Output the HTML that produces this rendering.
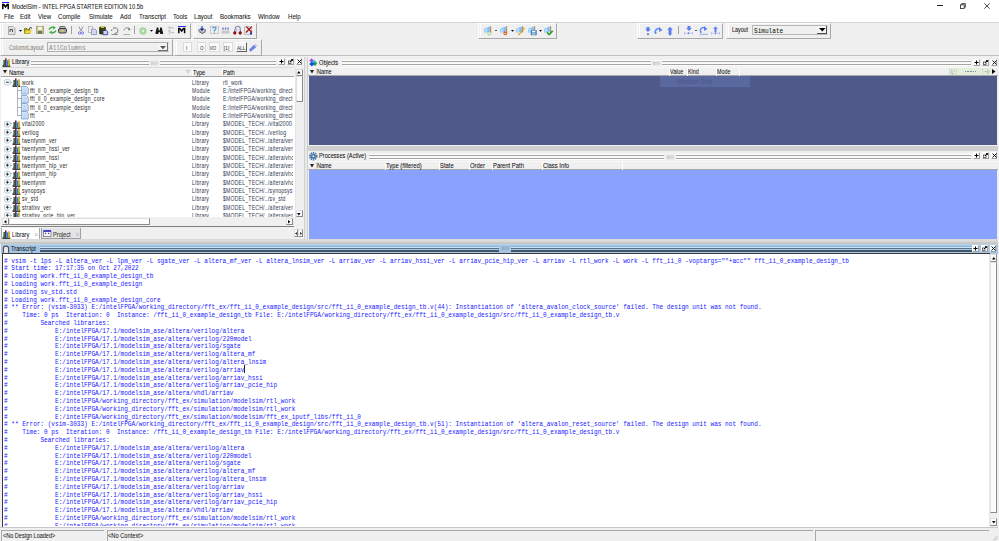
<!DOCTYPE html><html><head><meta charset="utf-8"><style>
html,body{margin:0;padding:0;width:999px;height:541px;overflow:hidden;background:#f0f0f0;position:relative}
div{position:absolute;box-sizing:border-box}
.t{white-space:pre;font-family:"Liberation Sans",sans-serif}
</style></head><body>
<div style="left:0px;top:0px;width:999px;height:22px;background:#fff"></div>
<div style="left:1.5px;top:1.8px;width:7.5px;height:1.3px;background:#1a1aff"></div>
<div style="left:1.5px;top:4px;width:7px;height:5.5px"><svg width="7" height="5.5" viewBox="0 0 7 5.5" style="display:block;overflow:visible"><path d="M0.8 5.2V0.6H1.8L3.5 3L5.2 0.6H6.2V5.2" fill="none" stroke="#000" stroke-width="1.5" stroke-linejoin="miter"/></svg></div>
<div class="t" style="left:12px;top:1.50px;font-size:6.5px;line-height:10px;color:#1a1a1a;font-family:'Liberation Sans',sans-serif;transform:scaleX(0.875);transform-origin:0 50%;-webkit-text-stroke:0.06px #1a1a1a;">ModelSim - INTEL FPGA STARTER EDITION 10.5b</div>
<div style="left:936.5px;top:5.3px;width:6px;height:0.8px;background:#222"></div>
<div style="left:959.5px;top:2.5px;width:6px;height:6px"><svg width="6" height="6" viewBox="0 0 6 6" style="display:block;overflow:visible"><rect x="0.5" y="1.8" width="3.7" height="3.7" fill="none" stroke="#222" stroke-width="0.8"/><path d="M1.8 1.8V0.6H5.4V4.2H4.2" fill="none" stroke="#222" stroke-width="0.8"/></svg></div>
<div style="left:983.5px;top:2.5px;width:6px;height:6px"><svg width="6" height="6" viewBox="0 0 6 6" style="display:block;overflow:visible"><path d="M0.3 0.3L5.7 5.7M5.7 0.3L0.3 5.7" stroke="#222" stroke-width="0.8"/></svg></div>
<div class="t" style="left:3.7px;top:12.40px;font-size:6.5px;line-height:10px;color:#1a1a1a;font-family:'Liberation Sans',sans-serif;transform:scaleX(0.94);transform-origin:0 50%;-webkit-text-stroke:0.06px #1a1a1a;">File</div>
<div class="t" style="left:20px;top:12.40px;font-size:6.5px;line-height:10px;color:#1a1a1a;font-family:'Liberation Sans',sans-serif;transform:scaleX(0.94);transform-origin:0 50%;-webkit-text-stroke:0.06px #1a1a1a;">Edit</div>
<div class="t" style="left:37.5px;top:12.40px;font-size:6.5px;line-height:10px;color:#1a1a1a;font-family:'Liberation Sans',sans-serif;transform:scaleX(0.94);transform-origin:0 50%;-webkit-text-stroke:0.06px #1a1a1a;">View</div>
<div class="t" style="left:58px;top:12.40px;font-size:6.5px;line-height:10px;color:#1a1a1a;font-family:'Liberation Sans',sans-serif;transform:scaleX(0.94);transform-origin:0 50%;-webkit-text-stroke:0.06px #1a1a1a;">Compile</div>
<div class="t" style="left:89px;top:12.40px;font-size:6.5px;line-height:10px;color:#1a1a1a;font-family:'Liberation Sans',sans-serif;transform:scaleX(0.94);transform-origin:0 50%;-webkit-text-stroke:0.06px #1a1a1a;">Simulate</div>
<div class="t" style="left:120px;top:12.40px;font-size:6.5px;line-height:10px;color:#1a1a1a;font-family:'Liberation Sans',sans-serif;transform:scaleX(0.94);transform-origin:0 50%;-webkit-text-stroke:0.06px #1a1a1a;">Add</div>
<div class="t" style="left:139px;top:12.40px;font-size:6.5px;line-height:10px;color:#1a1a1a;font-family:'Liberation Sans',sans-serif;transform:scaleX(0.94);transform-origin:0 50%;-webkit-text-stroke:0.06px #1a1a1a;">Transcript</div>
<div class="t" style="left:172.5px;top:12.40px;font-size:6.5px;line-height:10px;color:#1a1a1a;font-family:'Liberation Sans',sans-serif;transform:scaleX(0.94);transform-origin:0 50%;-webkit-text-stroke:0.06px #1a1a1a;">Tools</div>
<div class="t" style="left:194px;top:12.40px;font-size:6.5px;line-height:10px;color:#1a1a1a;font-family:'Liberation Sans',sans-serif;transform:scaleX(0.94);transform-origin:0 50%;-webkit-text-stroke:0.06px #1a1a1a;">Layout</div>
<div class="t" style="left:219.5px;top:12.40px;font-size:6.5px;line-height:10px;color:#1a1a1a;font-family:'Liberation Sans',sans-serif;transform:scaleX(0.94);transform-origin:0 50%;-webkit-text-stroke:0.06px #1a1a1a;">Bookmarks</div>
<div class="t" style="left:258px;top:12.40px;font-size:6.5px;line-height:10px;color:#1a1a1a;font-family:'Liberation Sans',sans-serif;transform:scaleX(0.94);transform-origin:0 50%;-webkit-text-stroke:0.06px #1a1a1a;">Window</div>
<div class="t" style="left:288px;top:12.40px;font-size:6.5px;line-height:10px;color:#1a1a1a;font-family:'Liberation Sans',sans-serif;transform:scaleX(0.94);transform-origin:0 50%;-webkit-text-stroke:0.06px #1a1a1a;">Help</div>
<div style="left:0px;top:21.8px;width:999px;height:34px;background:#f0f0f0;border-top:1px solid #d4d4d4"></div>
<div style="left:0px;top:55.4px;width:999px;height:1px;background:#c0c0c0"></div>
<div style="left:0px;top:22.5px;width:190.5px;height:16.299999999999997px;border-right:1px solid #a8a8a8;border-bottom:1px solid #a8a8a8;border-left:1px solid #fcfcfc;border-top:1px solid #fcfcfc"></div>
<div style="left:2px;top:24.0px;width:1px;height:13.299999999999997px;background:#a8a8a8;border-right:0.5px solid #fff"></div>
<div style="left:192.5px;top:22.5px;width:64.5px;height:16.299999999999997px;border-right:1px solid #a8a8a8;border-bottom:1px solid #a8a8a8;border-left:1px solid #fcfcfc;border-top:1px solid #fcfcfc"></div>
<div style="left:194.5px;top:24.0px;width:1px;height:13.299999999999997px;background:#a8a8a8;border-right:0.5px solid #fff"></div>
<div style="left:478px;top:22.5px;width:79px;height:16.299999999999997px;border-right:1px solid #a8a8a8;border-bottom:1px solid #a8a8a8;border-left:1px solid #fcfcfc;border-top:1px solid #fcfcfc"></div>
<div style="left:480px;top:24.0px;width:1px;height:13.299999999999997px;background:#a8a8a8;border-right:0.5px solid #fff"></div>
<div style="left:637px;top:22.5px;width:86px;height:16.299999999999997px;border-right:1px solid #a8a8a8;border-bottom:1px solid #a8a8a8;border-left:1px solid #fcfcfc;border-top:1px solid #fcfcfc"></div>
<div style="left:639px;top:24.0px;width:1px;height:13.299999999999997px;background:#a8a8a8;border-right:0.5px solid #fff"></div>
<div style="left:725.5px;top:22.5px;width:105.5px;height:16.299999999999997px;border-right:1px solid #a8a8a8;border-bottom:1px solid #a8a8a8;border-left:1px solid #fcfcfc;border-top:1px solid #fcfcfc"></div>
<div style="left:727.5px;top:24.0px;width:1px;height:13.299999999999997px;background:#a8a8a8;border-right:0.5px solid #fff"></div>
<div style="left:0px;top:39px;width:172.5px;height:17.4px;border-right:1px solid #a8a8a8;border-bottom:1px solid #a8a8a8;border-left:1px solid #fcfcfc;border-top:1px solid #fcfcfc"></div>
<div style="left:2px;top:40.5px;width:1px;height:14.399999999999999px;background:#a8a8a8;border-right:0.5px solid #fff"></div>
<div style="left:174px;top:39px;width:88px;height:17.4px;border-right:1px solid #a8a8a8;border-bottom:1px solid #a8a8a8;border-left:1px solid #fcfcfc;border-top:1px solid #fcfcfc"></div>
<div style="left:176px;top:40.5px;width:1px;height:14.399999999999999px;background:#a8a8a8;border-right:0.5px solid #fff"></div>
<div style="left:8px;top:25.5px;width:7.5px;height:9px"><svg width="7.5" height="9" viewBox="0 0 7.5 9" style="display:block;overflow:visible"><path d="M0.5 0.5H5L7 2.5V8.5H0.5Z" fill="#e4e4e4" stroke="#9a9a9a" stroke-width="0.8"/><path d="M2 6V3.5H4.5V6" fill="none" stroke="#404040" stroke-width="0.9"/></svg></div>
<div style="left:18.5px;top:29.7px;width:3px;height:2px"><svg width="3" height="2" viewBox="0 0 3 2" style="display:block;overflow:visible"><path d="M0 0H3L1.5 1.8Z" fill="#000"/></svg></div>
<div style="left:24px;top:27.0px;width:8.5px;height:7px"><svg width="8.5" height="7" viewBox="0 0 8.5 7" style="display:block;overflow:visible"><path d="M0.5 1.5H3L4 2.5H6V6.5H0.5Z" fill="#b8a000" stroke="#605000" stroke-width="0.6"/><path d="M1.5 3.5H8L6.5 6.5H0.5Z" fill="#e8d840"/><path d="M5 1.5Q6.5 0 8 1.2" fill="none" stroke="#000" stroke-width="0.8"/></svg></div>
<div style="left:36px;top:26.0px;width:8px;height:8px"><svg width="8" height="8" viewBox="0 0 8 8" style="display:block;overflow:visible"><rect x="0.4" y="0.4" width="7.2" height="7.2" fill="#c8c890" stroke="#a0a060" stroke-width="0.8"/><rect x="2" y="0.8" width="4" height="3" fill="#f4f4f4"/><rect x="2" y="5" width="4" height="2.6" fill="#707070"/></svg></div>
<div style="left:47.5px;top:26.0px;width:9px;height:8px"><svg width="9" height="8" viewBox="0 0 9 8" style="display:block;overflow:visible"><path d="M1 3.5Q2.5 0.5 6 1.5" fill="none" stroke="#40b040" stroke-width="1.6"/><path d="M5 0L8 1.8L5.3 3.5Z" fill="#40b040"/><path d="M8 4.5Q6.5 7.5 3 6.5" fill="none" stroke="#40b040" stroke-width="1.6"/><path d="M4 8L1 6.2L3.7 4.5Z" fill="#40b040"/></svg></div>
<div style="left:58px;top:26.0px;width:9px;height:8px"><svg width="9" height="8" viewBox="0 0 9 8" style="display:block;overflow:visible"><path d="M2 0.5H6.5L7.5 2.5H1.5Z" fill="#c0c0c0" stroke="#404040" stroke-width="0.7"/><rect x="0.5" y="2.5" width="8" height="4.5" rx="1.5" fill="#a8a8a8" stroke="#303030" stroke-width="0.9"/><rect x="3" y="4.2" width="3" height="1.2" fill="#e0d040"/></svg></div>
<div style="left:71.3px;top:26px;width:0.9px;height:8px;background:#a0a0a0"></div>
<div style="left:78px;top:25.5px;width:6px;height:9px"><svg width="6" height="9" viewBox="0 0 6 9" style="display:block;overflow:visible"><path d="M1 0.5L3 5M5 0.5L3 5" stroke="#707070" stroke-width="0.7" fill="none"/><circle cx="1.6" cy="7" r="1.2" fill="none" stroke="#6a70f0" stroke-width="0.9"/><circle cx="4.4" cy="7" r="1.2" fill="none" stroke="#6a70f0" stroke-width="0.9"/></svg></div>
<div style="left:87.5px;top:25.5px;width:9px;height:9px"><svg width="9" height="9" viewBox="0 0 9 9" style="display:block;overflow:visible"><rect x="0.5" y="0.5" width="4" height="6" fill="#f0f0f0" stroke="#a0a0a0" stroke-width="0.6"/><path d="M3.5 3H7L8.5 4.5V8.5H3.5Z" fill="#d8d8e8" stroke="#7080c0" stroke-width="0.7"/></svg></div>
<div style="left:98.5px;top:25.5px;width:9px;height:9px"><svg width="9" height="9" viewBox="0 0 9 9" style="display:block;overflow:visible"><rect x="0.5" y="1" width="6" height="7" rx="0.8" fill="#3c3c10" stroke="#202000" stroke-width="0.6"/><rect x="1.8" y="0.3" width="3.4" height="1.6" fill="#e0d040"/><path d="M4 4.5H7.5L8.7 5.7V8.7H4Z" fill="#d0d0e8" stroke="#2030a0" stroke-width="0.8"/></svg></div>
<div style="left:111px;top:26.5px;width:8px;height:8px"><svg width="8" height="8" viewBox="0 0 8 8" style="display:block;overflow:visible"><path d="M1 2.5L0.5 4" stroke="#404040" stroke-width="0.8"/><path d="M2 1.2Q6.5 0 7 3.5Q7 6.5 3.5 6.5" fill="none" stroke="#555" stroke-width="0.8"/><path d="M0.5 7.5H7" stroke="#777" stroke-width="0.8"/></svg></div>
<div style="left:123px;top:26.5px;width:8px;height:8px"><svg width="8" height="8" viewBox="0 0 8 8" style="display:block;overflow:visible"><path d="M6 1.2Q1.5 0 1 3.5" fill="none" stroke="#777" stroke-width="0.8"/><path d="M5.5 0.5L7.5 2.5L5.5 3.5Z" fill="#555"/><path d="M0.5 7.5H7" stroke="#999" stroke-width="0.8"/></svg></div>
<div style="left:134.3px;top:26px;width:0.9px;height:8px;background:#a0a0a0"></div>
<div style="left:139px;top:26.5px;width:8px;height:8px"><svg width="8" height="8" viewBox="0 0 8 8" style="display:block;overflow:visible"><circle cx="4" cy="4" r="3.7" fill="#a8d8a0"/><circle cx="4" cy="4" r="1" fill="#f0fff0"/></svg></div>
<div style="left:149.5px;top:30px;width:3px;height:2px"><svg width="3" height="2" viewBox="0 0 3 2" style="display:block;overflow:visible"><path d="M0 0H3L1.5 1.8Z" fill="#000"/></svg></div>
<div style="left:155px;top:26.5px;width:8.5px;height:7.5px"><svg width="8.5" height="7.5" viewBox="0 0 8.5 7.5" style="display:block;overflow:visible"><path d="M1.8 0.5H3.3L3.8 3.5H4.7L5.2 0.5H6.7L8.2 6.5Q6.5 7.5 5 6.5L4.7 5H3.8L3.5 6.5Q2 7.5 0.3 6.5Z" fill="#151515"/></svg></div>
<div style="left:166.5px;top:26.0px;width:8px;height:8.5px"><svg width="8" height="8.5" viewBox="0 0 8 8.5" style="display:block;overflow:visible"><circle cx="2.5" cy="1.8" r="1.3" fill="#c8c8c8"/><circle cx="2.5" cy="5" r="1.3" fill="#c8c8c8"/><circle cx="2.5" cy="7.5" r="1" fill="#d0d0d0"/><path d="M3.5 2H7M3.5 6.5H7" stroke="#a0a0a0" stroke-width="0.6"/></svg></div>
<div style="left:178px;top:25.5px;width:7.8px;height:1.4px;background:#2a30ff"></div>
<div style="left:178px;top:28.3px;width:7.5px;height:5.5px"><svg width="7.5" height="5.5" viewBox="0 0 7.5 5.5" style="display:block;overflow:visible"><path d="M0.8 5.2V0.6H1.8L3.7 3L5.6 0.6H6.6V5.2" fill="none" stroke="#000" stroke-width="1.5"/></svg></div>
<div style="left:198px;top:26.0px;width:8.5px;height:8px"><svg width="8.5" height="8" viewBox="0 0 8.5 8" style="display:block;overflow:visible"><path d="M0.5 4L4 2.5L8 4L4.5 7.5Z" fill="#d0d0d0" stroke="#404040" stroke-width="0.6"/><path d="M0.5 5.5L4.5 7.5L8 5.5" fill="none" stroke="#404040" stroke-width="0.6"/><path d="M4 0V4M2.5 2.5L4 4.5L5.5 2.5" stroke="#1a3ab0" stroke-width="1.1" fill="none"/></svg></div>
<div style="left:210px;top:26.0px;width:9px;height:8px"><svg width="9" height="8" viewBox="0 0 9 8" style="display:block;overflow:visible"><rect x="0.5" y="0.5" width="8" height="7" fill="#f0f0f0" stroke="#b0b0b0" stroke-width="0.6"/><path d="M2.5 2.3Q4.5 0.3 6 2.2Q6 3.8 4.3 4.3V5.5" fill="none" stroke="#4a90e0" stroke-width="1.2"/><circle cx="4.3" cy="6.8" r="0.6" fill="#4a90e0"/></svg></div>
<div style="left:221px;top:26.0px;width:9px;height:8px"><svg width="9" height="8" viewBox="0 0 9 8" style="display:block;overflow:visible"><rect x="0.5" y="4.5" width="8" height="3.2" fill="#c8c8d0"/><path d="M2 1V4M4.5 1V4M7 1V4M1.2 2L2 3.5L2.8 2M3.7 2L4.5 3.5L5.3 2M6.2 2L7 3.5L7.8 2" stroke="#7070d0" stroke-width="0.6" fill="none"/></svg></div>
<div style="left:233px;top:26.0px;width:9px;height:8.5px"><svg width="9" height="8.5" viewBox="0 0 9 8.5" style="display:block;overflow:visible"><path d="M1.5 6L2.5 1Q4.5 -0.5 7 1L7.5 6" fill="#e8e8f4" stroke="#606080" stroke-width="0.8"/><path d="M4 2.5L3.5 5.5" stroke="#8080b0" stroke-width="0.5"/><circle cx="1.8" cy="7" r="1.4" fill="#b01010" stroke="#300" stroke-width="0.4"/><circle cx="7.2" cy="7" r="1.4" fill="#b01010" stroke="#300" stroke-width="0.4"/></svg></div>
<div style="left:244px;top:26.0px;width:9px;height:9px"><svg width="9" height="9" viewBox="0 0 9 9" style="display:block;overflow:visible"><path d="M0.5 0.5H5.5L7.5 2.5V8.5H0.5Z" fill="#e8e8e8" stroke="#a0a0a0" stroke-width="0.6"/><path d="M2.5 0.8L8 6.5M7.8 0.5L2 6.5" stroke="#b01818" stroke-width="1.3"/><path d="M6 7L7 5.5L8 7V8.5H6Z" fill="#1a3ab0"/></svg></div>
<div style="left:484px;top:26.0px;width:9px;height:9px"><svg width="9" height="9" viewBox="0 0 9 9" style="display:block;overflow:visible"><path d="M0.3 2.8L5.8 0.6V5.6L0.3 6.8Z" fill="#7cbcf4"/><path d="M1 3L3.5 2V5.5L1 6.2Z" fill="#b4dcfc"/><path d="M6.6 0.3V6.5" stroke="#b88858" stroke-width="1.1"/><circle cx="5.3" cy="7.3" r="1.6" fill="#e8f4e0" stroke="#88b878" stroke-width="0.7"/></svg></div>
<div style="left:500px;top:26.0px;width:9px;height:9px"><svg width="9" height="9" viewBox="0 0 9 9" style="display:block;overflow:visible"><path d="M0.3 2.8L5.8 0.6V5.6L0.3 6.8Z" fill="#7cbcf4"/><path d="M1 3L3.5 2V5.5L1 6.2Z" fill="#b4dcfc"/><path d="M6.6 0.3V6.5" stroke="#b88858" stroke-width="1.1"/><circle cx="5.3" cy="7.3" r="1.7" fill="#e86828" stroke="#b04810" stroke-width="0.4"/><rect x="4.3" y="7" width="2" height="0.6" fill="#fff"/></svg></div>
<div style="left:516px;top:26.0px;width:9px;height:9px"><svg width="9" height="9" viewBox="0 0 9 9" style="display:block;overflow:visible"><path d="M0.3 2.8L5.8 0.6V5.6L0.3 6.8Z" fill="#7cbcf4"/><path d="M1 3L3.5 2V5.5L1 6.2Z" fill="#b4dcfc"/><path d="M6.6 0.3V6.5" stroke="#b88858" stroke-width="1.1"/><path d="M2.3 8.7L7.8 1.8L8.6 2.6L3.2 9Z" fill="#e8c030" stroke="#b08010" stroke-width="0.4"/></svg></div>
<div style="left:528px;top:26.0px;width:9px;height:9px"><svg width="9" height="9" viewBox="0 0 9 9" style="display:block;overflow:visible"><path d="M0.3 2.8L5.8 0.6V5.6L0.3 6.8Z" fill="#7cbcf4"/><path d="M1 3L3.5 2V5.5L1 6.2Z" fill="#b4dcfc"/><path d="M6.6 0.3V6.5" stroke="#b88858" stroke-width="1.1"/><rect x="3" y="4.5" width="5.5" height="4.5" fill="#5a90e0" stroke="#2a60b0" stroke-width="0.4"/><rect x="4.2" y="4.8" width="3" height="1.5" fill="#fff"/><rect x="4.2" y="7.2" width="3" height="1.5" fill="#a8e0a8"/></svg></div>
<div style="left:544px;top:26.0px;width:9px;height:9px"><svg width="9" height="9" viewBox="0 0 9 9" style="display:block;overflow:visible"><path d="M0.3 2.8L5.8 0.6V5.6L0.3 6.8Z" fill="#7cbcf4"/><path d="M1 3L3.5 2V5.5L1 6.2Z" fill="#b4dcfc"/><path d="M6.6 0.3V6.5" stroke="#b88858" stroke-width="1.1"/><path d="M3 6.3L5.2 8.5L8.7 4.8" fill="none" stroke="#30a030" stroke-width="1.7"/></svg></div>
<div style="left:495.3px;top:29.8px;width:1.8px;height:0.8px;background:#555"></div>
<div style="left:511.3px;top:29.8px;width:3px;height:2px"><svg width="3" height="2" viewBox="0 0 3 2" style="display:block;overflow:visible"><path d="M0 0H3L1.5 1.8Z" fill="#000"/></svg></div>
<div style="left:538.5px;top:29.8px;width:3px;height:2px"><svg width="3" height="2" viewBox="0 0 3 2" style="display:block;overflow:visible"><path d="M0 0H3L1.5 1.8Z" fill="#000"/></svg></div>
<div style="left:644.5px;top:26.5px;width:6px;height:8.5px"><svg width="6" height="8.5" viewBox="0 0 6 8.5" style="display:block;overflow:visible"><path d="M1.5 0H4.5V2.2H5.8L3.0 5L0.2 2.2H1.5Z" fill="#5a80f0"/><circle cx="3" cy="7.2" r="1.1" fill="#5a80f0"/></svg></div>
<div style="left:653.5px;top:26.5px;width:9px;height:7px"><svg width="9" height="7" viewBox="0 0 9 7" style="display:block;overflow:visible"><path d="M1 5Q2 1 5.5 1.5" fill="none" stroke="#6a90f4" stroke-width="1.6"/><path d="M5 0L8.5 3L5 5Z" fill="#5a80f0"/><circle cx="1.5" cy="5.8" r="1.1" fill="#5a80f0"/></svg></div>
<div style="left:667px;top:26.5px;width:6px;height:8.5px"><svg width="6" height="8.5" viewBox="0 0 6 8.5" style="display:block;overflow:visible"><path d="M1.5 8.5H4.5V3.8H5.8L3 0.8L0.2 3.8H1.5Z" fill="#5a80f0" transform="translate(0,-1)"/><circle cx="3" cy="7.5" r="1.1" fill="#5a80f0"/></svg></div>
<div style="left:677.8px;top:26px;width:0.9px;height:8px;background:#a0a0a0"></div>
<div style="left:684px;top:26.0px;width:9px;height:9px"><svg width="9" height="9" viewBox="0 0 9 9" style="display:block;overflow:visible"><path d="M3.5 0H6.5V2.2H7.8L5.0 5L2.2 2.2H3.5Z" fill="#5a80f0"/><path d="M0.5 6V8.5M8.5 6V8.5M2 6.5V8M7 6.5V8" stroke="#8aa0f0" stroke-width="0.6"/><circle cx="4.5" cy="7.3" r="1" fill="#5a80f0"/></svg></div>
<div style="left:695.3px;top:29.8px;width:1.6px;height:0.8px;background:#555"></div>
<div style="left:698.5px;top:26.0px;width:9px;height:9px"><svg width="9" height="9" viewBox="0 0 9 9" style="display:block;overflow:visible"><path d="M1 5Q2 1 5.5 1.5" fill="none" stroke="#6a90f4" stroke-width="1.5"/><path d="M5 0L8.5 3L5 5Z" fill="#5a80f0"/><circle cx="1.8" cy="6" r="1" fill="#5a80f0"/><path d="M0.5 8.3H9" stroke="#6a90f4" stroke-width="0.7"/></svg></div>
<div style="left:711px;top:26.0px;width:9px;height:9px"><svg width="9" height="9" viewBox="0 0 9 9" style="display:block;overflow:visible"><path d="M3.5 6H5.5V3H6.8L4.5 0.3L2.2 3H3.5Z" fill="#5a80f0"/><path d="M0.5 6V8.5M8.5 6V8.5M2 6.5V8M7 6.5V8" stroke="#8aa0f0" stroke-width="0.6"/><circle cx="4.5" cy="7.3" r="1" fill="#5a80f0"/></svg></div>
<div class="t" style="left:732px;top:25.30px;font-size:6.3px;line-height:10px;color:#101010;font-family:'Liberation Sans',sans-serif;transform:scaleX(0.85);transform-origin:0 50%;-webkit-text-stroke:0.06px #101010;">Layout</div>
<div style="left:752px;top:25.3px;width:76px;height:9.5px;background:#f0f0f0;border:1px solid #b8b8b8;border-right:1px solid #e8e8e8"></div>
<div class="t" style="left:753.5px;top:25.80px;font-size:7px;line-height:10px;color:#101010;font-family:'Liberation Mono',sans-serif;transform:scaleX(0.87);transform-origin:0 50%;-webkit-text-stroke:0.05px #101010;">Simulate</div>
<div style="left:817px;top:26.3px;width:10px;height:7.5px;background:#f4f4f4;border-right:1px solid #505050;border-bottom:1px solid #505050"></div>
<div style="left:818.5px;top:28.3px;width:6.5px;height:4px"><svg width="6.5" height="4" viewBox="0 0 6.5 4" style="display:block;overflow:visible"><path d="M0 0H6.5L3.25 3.5Z" fill="#000"/></svg></div>
<div class="t" style="left:9px;top:42.50px;font-size:6.5px;line-height:10px;color:#8a8070;font-family:'Liberation Sans',sans-serif;transform:scaleX(0.82);transform-origin:0 50%;-webkit-text-stroke:0.06px #8a8070;">ColumnLayout</div>
<div style="left:47px;top:42px;width:122px;height:10px;background:#f0f0f0;border:1px solid #b0b0b0;border-right:1px solid #e8e8e8"></div>
<div class="t" style="left:48.5px;top:42.50px;font-size:7px;line-height:10px;color:#8a8a8a;font-family:'Liberation Mono',sans-serif;transform:scaleX(0.87);transform-origin:0 50%;-webkit-text-stroke:0.05px #8a8a8a;">AllColumns</div>
<div style="left:157.5px;top:43px;width:10.5px;height:8px;background:#f4f4f4;border-right:1px solid #707070;border-bottom:1px solid #707070"></div>
<div style="left:159.5px;top:45.5px;width:6px;height:3.5px"><svg width="6" height="3.5" viewBox="0 0 6 3.5" style="display:block;overflow:visible"><path d="M0 0H6L3 3.2Z" fill="#555"/></svg></div>
<div style="left:183px;top:42px;width:8.5px;height:10px;background:#fafafa;border:1px solid #dcdcdc"></div>
<div class="t" style="left:185.85px;top:42.70px;font-size:5.5px;line-height:10px;color:#404040;font-family:'Liberation Sans',sans-serif;transform:scaleX(0.85);transform-origin:0 50%;-webkit-text-stroke:0.06px #404040;">I</div>
<div style="left:196.5px;top:42px;width:9px;height:10px;background:#fafafa;border:1px solid #dcdcdc"></div>
<div class="t" style="left:199.6px;top:42.70px;font-size:5.5px;line-height:10px;color:#404040;font-family:'Liberation Sans',sans-serif;transform:scaleX(0.85);transform-origin:0 50%;-webkit-text-stroke:0.06px #404040;">O</div>
<div style="left:209px;top:42px;width:10.5px;height:10px;background:#fafafa;border:1px solid #dcdcdc"></div>
<div class="t" style="left:210.05px;top:42.70px;font-size:5.5px;line-height:10px;color:#404040;font-family:'Liberation Sans',sans-serif;transform:scaleX(0.85);transform-origin:0 50%;-webkit-text-stroke:0.06px #404040;">I/O</div>
<div style="left:223px;top:42px;width:10px;height:10px;background:#fafafa;border:1px solid #dcdcdc"></div>
<div class="t" style="left:223.8px;top:42.70px;font-size:5.5px;line-height:10px;color:#404040;font-family:'Liberation Sans',sans-serif;transform:scaleX(0.85);transform-origin:0 50%;-webkit-text-stroke:0.06px #404040;">[1]</div>
<div style="left:236px;top:42px;width:11px;height:10px;background:#f4f4f4;border-right:1px solid #606060;border-bottom:1px solid #606060;border-top:1px solid #fff;border-left:1px solid #fff"></div>
<div class="t" style="left:237.3px;top:42.70px;font-size:5.5px;line-height:10px;color:#404040;font-family:'Liberation Sans',sans-serif;transform:scaleX(0.85);transform-origin:0 50%;-webkit-text-stroke:0.06px #404040;">ALL</div>
<div style="left:249px;top:42.5px;width:9px;height:9px"><svg width="9" height="9" viewBox="0 0 9 9" style="display:block;overflow:visible"><path d="M1.5 8.5L0.5 6.5L5 2L7 4Z" fill="#6a8ae8" stroke="#4a6ad0" stroke-width="0.5"/><path d="M5 2L6.5 0.5L8.5 2.5L7 4Z" fill="#e0c8e8"/><path d="M6 1.2L8 3.2" stroke="#b0d0b0" stroke-width="0.6"/></svg></div>
<div style="left:0px;top:56.5px;width:999px;height:471px;background:#f0f0f0"></div>
<div style="left:31.2px;top:60px;width:244.8px;height:6px;background:linear-gradient(#fff 0 1px,#a4a4a4 1px 2px,#fafafa 2px 3.6px,#a4a4a4 3.6px 4.6px,#fff 4.6px 5.6px,transparent 5.6px)"></div>
<div class="t" style="left:12px;top:57.30px;font-size:6.5px;line-height:10px;color:#101010;font-family:'Liberation Sans',sans-serif;transform:scaleX(0.87);transform-origin:0 50%;-webkit-text-stroke:0.06px #101010;">Library</div>
<div style="left:278px;top:58px;width:6.8px;height:7px;background:#f6f6f6;border-right:1px solid #a0a0a0;border-bottom:1px solid #a0a0a0;border-top:0.5px solid #fff;border-left:0.5px solid #fff"></div>
<div style="left:287px;top:58px;width:6.8px;height:7px;background:#f6f6f6;border-right:1px solid #a0a0a0;border-bottom:1px solid #a0a0a0;border-top:0.5px solid #fff;border-left:0.5px solid #fff"></div>
<div style="left:295.5px;top:58px;width:6.8px;height:7px;background:#f6f6f6;border-right:1px solid #a0a0a0;border-bottom:1px solid #a0a0a0;border-top:0.5px solid #fff;border-left:0.5px solid #fff"></div>
<div style="left:279px;top:59px;width:5px;height:5px"><svg width="5" height="5" viewBox="0 0 5 5" style="display:block;overflow:visible"><path d="M2.5 0.5V4.5M0.5 2.5H4.5" stroke="#000" stroke-width="1"/></svg></div>
<div style="left:288px;top:59px;width:5px;height:5px"><svg width="5" height="5" viewBox="0 0 5 5" style="display:block;overflow:visible"><rect x="0.5" y="2" width="2.5" height="2.5" fill="none" stroke="#333" stroke-width="0.7"/><path d="M2 3L4.5 0.5M3 0.5H4.5V2" fill="none" stroke="#000" stroke-width="0.9"/></svg></div>
<div style="left:296.5px;top:59px;width:5px;height:5px"><svg width="5" height="5" viewBox="0 0 5 5" style="display:block;overflow:visible"><path d="M0.5 0.5L4.5 4.5M4.5 0.5L0.5 4.5" stroke="#000" stroke-width="0.9"/></svg></div>
<div style="left:1.6px;top:58.2px;width:9px;height:9px"><svg width="9" height="9" viewBox="0 0 9 9" style="display:block;overflow:visible"><path d="M0.2 8.6L1.6 5.5V8.6Z M8.6 8.6L7.2 5.5V8.6Z" fill="#101010"/><rect x="1.4" y="2" width="1.6" height="6.4" fill="#0c8040"/><rect x="3" y="0.4" width="1.6" height="8" fill="#8c1460"/><rect x="4.6" y="2.3" width="1.6" height="6.1" fill="#2480d0"/><rect x="6.2" y="1.3" width="1.5" height="7.1" fill="#b8a000"/><rect x="1" y="8" width="6.8" height="0.8" fill="#202020"/></svg></div>
<div style="left:148.5px;top:60.3px;width:11.5px;height:6px;background:#f2f2f2"></div>
<div style="left:150.0px;top:61.099999999999994px;width:8.5px;height:4.4px"><svg width="8.5" height="4.4" viewBox="0 0 8.5 4.4" style="display:block;overflow:visible"><rect x="0.3" y="0.3" width="7.9" height="3.8" fill="none" stroke="#a8a8a8" stroke-width="0.4" stroke-dasharray="0.5 0.5" opacity="0.8"/><path d="M1 1.2H7.5M1 2.2H7.5M1 3.2H7.5" stroke="#a8a8a8" stroke-width="0.7" stroke-dasharray="0.7 0.5"/></svg></div>
<div style="left:1px;top:67.3px;width:293px;height:9.3px;background:#f0f0f0;border-top:1px solid #dadada;border-bottom:1px solid #a4a4a4"></div>
<div style="left:2.8px;top:70.3px;width:4px;height:3.5px"><svg width="4" height="3.5" viewBox="0 0 4 3.5" style="display:block;overflow:visible"><path d="M0 0H4L2 3.5Z" fill="#202020"/></svg></div>
<div style="left:8px;top:68.3px;width:0.8px;height:7.5px;background:#d4d4d4;border-right:0.5px solid #fff"></div>
<div class="t" style="left:9px;top:67.50px;font-size:6.5px;line-height:10px;color:#101010;font-family:'Liberation Sans',sans-serif;transform:scaleX(0.87);transform-origin:0 50%;-webkit-text-stroke:0.06px #101010;">Name</div>
<div style="left:185.5px;top:69.5px;width:4px;height:3.5px"><svg width="4" height="3.5" viewBox="0 0 4 3.5" style="display:block;overflow:visible"><path d="M0.3 0.3H3.7L2 3Z" fill="none" stroke="#a0a0a0" stroke-width="0.5"/></svg></div>
<div style="left:192.3px;top:68.3px;width:0.8px;height:7.5px;background:#c8c8c8;border-right:0.5px solid #fff"></div>
<div class="t" style="left:193.3px;top:67.50px;font-size:6.5px;line-height:10px;color:#101010;font-family:'Liberation Sans',sans-serif;transform:scaleX(0.87);transform-origin:0 50%;-webkit-text-stroke:0.06px #101010;">Type</div>
<div style="left:222px;top:68.3px;width:0.8px;height:7.5px;background:#c8c8c8;border-right:0.5px solid #fff"></div>
<div class="t" style="left:223px;top:67.50px;font-size:6.5px;line-height:10px;color:#101010;font-family:'Liberation Sans',sans-serif;transform:scaleX(0.87);transform-origin:0 50%;-webkit-text-stroke:0.06px #101010;">Path</div>
<div style="left:1px;top:76.5px;width:294px;height:141px;background:#fff"></div>
<div style="left:1px;top:76.5px;width:292px;height:140.5px;overflow:hidden">
<div style="left:3px;top:2.5px;width:7px;height:6.5px"><svg width="7" height="6.5" viewBox="0 0 7 6.5" style="display:block;overflow:visible"><rect x="0.4" y="0.4" width="6" height="5.6" rx="2" fill="#f8fafc" stroke="#b0bcd8" stroke-width="0.8"/><path d="M1.9 3.2H4.9" stroke="#202020" stroke-width="0.9"/></svg></div>
<div style="left:9.3px;top:5.2px;width:1.5px;height:0.6px;background:#b0b0b0"></div>
<div style="left:11.0px;top:1.4000000000000001px;width:9px;height:9px"><svg width="9" height="9" viewBox="0 0 9 9" style="display:block;overflow:visible"><path d="M0.2 8.6L1.6 5.5V8.6Z M8.6 8.6L7.2 5.5V8.6Z" fill="#101010"/><rect x="1.4" y="2" width="1.6" height="6.4" fill="#0c8040"/><rect x="3" y="0.4" width="1.6" height="8" fill="#8c1460"/><rect x="4.6" y="2.3" width="1.6" height="6.1" fill="#2480d0"/><rect x="6.2" y="1.3" width="1.5" height="7.1" fill="#b8a000"/><rect x="1" y="8" width="6.8" height="0.8" fill="#202020"/></svg></div>
<div class="t" style="left:20.9px;top:1.00px;font-size:6.5px;line-height:10px;color:#282828;font-family:'Liberation Sans',sans-serif;transform:scaleX(0.79);transform-origin:0 50%;-webkit-text-stroke:0.02px #282828;letter-spacing:0.3px">work</div>
<div class="t" style="left:191px;top:1.00px;font-size:6.5px;line-height:10px;color:#303850;font-family:'Liberation Sans',sans-serif;transform:scaleX(0.78);transform-origin:0 50%;-webkit-text-stroke:0.02px #303850;letter-spacing:0.3px">Library</div>
<div class="t" style="left:222px;top:1.00px;font-size:6.5px;line-height:10px;color:#303850;font-family:'Liberation Sans',sans-serif;transform:scaleX(0.78);transform-origin:0 50%;-webkit-text-stroke:0.02px #303850;letter-spacing:0.3px">rtl_work</div>
<div style="left:16.2px;top:9.640000000000004px;width:0.9px;height:8.34px;background:#b0b0b0"></div>
<div style="left:16.2px;top:13.640000000000004px;width:4px;height:0.9px;background:#b0b0b0"></div>
<div style="left:20px;top:9.840000000000003px;width:8px;height:8.5px"><svg width="8" height="8.5" viewBox="0 0 8 8.5" style="display:block;overflow:visible"><path d="M0.5 0.5H5.5L7.3 2.3V8H0.5Z" fill="#d4e6fa" stroke="#7a98c0" stroke-width="0.8"/><path d="M1.8 3H5.5M1.8 4.8H5.5M1.8 6.5H5.5" stroke="#a0c0e8" stroke-width="0.6"/></svg></div>
<div class="t" style="left:29.1px;top:9.34px;font-size:6.5px;line-height:10px;color:#282828;font-family:'Liberation Sans',sans-serif;transform:scaleX(0.79);transform-origin:0 50%;-webkit-text-stroke:0.02px #282828;letter-spacing:0.3px">fft_ii_0_example_design_tb</div>
<div class="t" style="left:191px;top:9.34px;font-size:6.5px;line-height:10px;color:#303850;font-family:'Liberation Sans',sans-serif;transform:scaleX(0.78);transform-origin:0 50%;-webkit-text-stroke:0.02px #303850;letter-spacing:0.3px">Module</div>
<div class="t" style="left:222px;top:9.34px;font-size:6.5px;line-height:10px;color:#303850;font-family:'Liberation Sans',sans-serif;transform:scaleX(0.78);transform-origin:0 50%;-webkit-text-stroke:0.02px #303850;letter-spacing:0.3px">E:/intelFPGA/working_direct</div>
<div style="left:16.2px;top:17.980000000000008px;width:0.9px;height:8.34px;background:#b0b0b0"></div>
<div style="left:16.2px;top:21.980000000000008px;width:4px;height:0.9px;background:#b0b0b0"></div>
<div style="left:20px;top:18.180000000000007px;width:8px;height:8.5px"><svg width="8" height="8.5" viewBox="0 0 8 8.5" style="display:block;overflow:visible"><path d="M0.5 0.5H5.5L7.3 2.3V8H0.5Z" fill="#d4e6fa" stroke="#7a98c0" stroke-width="0.8"/><path d="M1.8 3H5.5M1.8 4.8H5.5M1.8 6.5H5.5" stroke="#a0c0e8" stroke-width="0.6"/></svg></div>
<div class="t" style="left:29.1px;top:17.68px;font-size:6.5px;line-height:10px;color:#282828;font-family:'Liberation Sans',sans-serif;transform:scaleX(0.79);transform-origin:0 50%;-webkit-text-stroke:0.02px #282828;letter-spacing:0.3px">fft_ii_0_example_design_core</div>
<div class="t" style="left:191px;top:17.68px;font-size:6.5px;line-height:10px;color:#303850;font-family:'Liberation Sans',sans-serif;transform:scaleX(0.78);transform-origin:0 50%;-webkit-text-stroke:0.02px #303850;letter-spacing:0.3px">Module</div>
<div class="t" style="left:222px;top:17.68px;font-size:6.5px;line-height:10px;color:#303850;font-family:'Liberation Sans',sans-serif;transform:scaleX(0.78);transform-origin:0 50%;-webkit-text-stroke:0.02px #303850;letter-spacing:0.3px">E:/intelFPGA/working_direct</div>
<div style="left:16.2px;top:26.319999999999997px;width:0.9px;height:8.34px;background:#b0b0b0"></div>
<div style="left:16.2px;top:30.319999999999997px;width:4px;height:0.9px;background:#b0b0b0"></div>
<div style="left:20px;top:26.519999999999996px;width:8px;height:8.5px"><svg width="8" height="8.5" viewBox="0 0 8 8.5" style="display:block;overflow:visible"><path d="M0.5 0.5H5.5L7.3 2.3V8H0.5Z" fill="#d4e6fa" stroke="#7a98c0" stroke-width="0.8"/><path d="M1.8 3H5.5M1.8 4.8H5.5M1.8 6.5H5.5" stroke="#a0c0e8" stroke-width="0.6"/></svg></div>
<div class="t" style="left:29.1px;top:26.02px;font-size:6.5px;line-height:10px;color:#282828;font-family:'Liberation Sans',sans-serif;transform:scaleX(0.79);transform-origin:0 50%;-webkit-text-stroke:0.02px #282828;letter-spacing:0.3px">fft_ii_0_example_design</div>
<div class="t" style="left:191px;top:26.02px;font-size:6.5px;line-height:10px;color:#303850;font-family:'Liberation Sans',sans-serif;transform:scaleX(0.78);transform-origin:0 50%;-webkit-text-stroke:0.02px #303850;letter-spacing:0.3px">Module</div>
<div class="t" style="left:222px;top:26.02px;font-size:6.5px;line-height:10px;color:#303850;font-family:'Liberation Sans',sans-serif;transform:scaleX(0.78);transform-origin:0 50%;-webkit-text-stroke:0.02px #303850;letter-spacing:0.3px">E:/intelFPGA/working_direct</div>
<div style="left:16.2px;top:34.66px;width:0.9px;height:4.5px;background:#b0b0b0"></div>
<div style="left:16.2px;top:38.66px;width:4px;height:0.9px;background:#b0b0b0"></div>
<div style="left:20px;top:34.86px;width:8px;height:8.5px"><svg width="8" height="8.5" viewBox="0 0 8 8.5" style="display:block;overflow:visible"><path d="M0.5 0.5H5.5L7.3 2.3V8H0.5Z" fill="#d4e6fa" stroke="#7a98c0" stroke-width="0.8"/><path d="M1.8 3H5.5M1.8 4.8H5.5M1.8 6.5H5.5" stroke="#a0c0e8" stroke-width="0.6"/></svg></div>
<div class="t" style="left:29.1px;top:34.36px;font-size:6.5px;line-height:10px;color:#282828;font-family:'Liberation Sans',sans-serif;transform:scaleX(0.79);transform-origin:0 50%;-webkit-text-stroke:0.02px #282828;letter-spacing:0.3px">fft</div>
<div class="t" style="left:191px;top:34.36px;font-size:6.5px;line-height:10px;color:#303850;font-family:'Liberation Sans',sans-serif;transform:scaleX(0.78);transform-origin:0 50%;-webkit-text-stroke:0.02px #303850;letter-spacing:0.3px">Module</div>
<div class="t" style="left:222px;top:34.36px;font-size:6.5px;line-height:10px;color:#303850;font-family:'Liberation Sans',sans-serif;transform:scaleX(0.78);transform-origin:0 50%;-webkit-text-stroke:0.02px #303850;letter-spacing:0.3px">E:/intelFPGA/working_direct</div>
<div style="left:3px;top:44.2px;width:7px;height:6.5px"><svg width="7" height="6.5" viewBox="0 0 7 6.5" style="display:block;overflow:visible"><rect x="0.4" y="0.4" width="6" height="5.6" rx="2" fill="#f8fafc" stroke="#b0bcd8" stroke-width="0.8"/><path d="M1.9 3.2H4.9" stroke="#202020" stroke-width="0.9"/><path d="M3.4 1.7V4.7" stroke="#202020" stroke-width="0.9"/></svg></div>
<div style="left:9.3px;top:46.900000000000006px;width:1.5px;height:0.6px;background:#b0b0b0"></div>
<div style="left:11.0px;top:43.10000000000001px;width:9px;height:9px"><svg width="9" height="9" viewBox="0 0 9 9" style="display:block;overflow:visible"><path d="M0.2 8.6L1.6 5.5V8.6Z M8.6 8.6L7.2 5.5V8.6Z" fill="#101010"/><rect x="1.4" y="2" width="1.6" height="6.4" fill="#0c8040"/><rect x="3" y="0.4" width="1.6" height="8" fill="#8c1460"/><rect x="4.6" y="2.3" width="1.6" height="6.1" fill="#2480d0"/><rect x="6.2" y="1.3" width="1.5" height="7.1" fill="#b8a000"/><rect x="1" y="8" width="6.8" height="0.8" fill="#202020"/></svg></div>
<div class="t" style="left:20.9px;top:42.70px;font-size:6.5px;line-height:10px;color:#282828;font-family:'Liberation Sans',sans-serif;transform:scaleX(0.79);transform-origin:0 50%;-webkit-text-stroke:0.02px #282828;letter-spacing:0.3px">vital2000</div>
<div class="t" style="left:191px;top:42.70px;font-size:6.5px;line-height:10px;color:#303850;font-family:'Liberation Sans',sans-serif;transform:scaleX(0.78);transform-origin:0 50%;-webkit-text-stroke:0.02px #303850;letter-spacing:0.3px">Library</div>
<div class="t" style="left:222px;top:42.70px;font-size:6.5px;line-height:10px;color:#303850;font-family:'Liberation Sans',sans-serif;transform:scaleX(0.78);transform-origin:0 50%;-webkit-text-stroke:0.02px #303850;letter-spacing:0.3px">$MODEL_TECH/../vital2000</div>
<div style="left:3px;top:52.53999999999999px;width:7px;height:6.5px"><svg width="7" height="6.5" viewBox="0 0 7 6.5" style="display:block;overflow:visible"><rect x="0.4" y="0.4" width="6" height="5.6" rx="2" fill="#f8fafc" stroke="#b0bcd8" stroke-width="0.8"/><path d="M1.9 3.2H4.9" stroke="#202020" stroke-width="0.9"/><path d="M3.4 1.7V4.7" stroke="#202020" stroke-width="0.9"/></svg></div>
<div style="left:9.3px;top:55.239999999999995px;width:1.5px;height:0.6px;background:#b0b0b0"></div>
<div style="left:11.0px;top:51.44px;width:9px;height:9px"><svg width="9" height="9" viewBox="0 0 9 9" style="display:block;overflow:visible"><path d="M0.2 8.6L1.6 5.5V8.6Z M8.6 8.6L7.2 5.5V8.6Z" fill="#101010"/><rect x="1.4" y="2" width="1.6" height="6.4" fill="#0c8040"/><rect x="3" y="0.4" width="1.6" height="8" fill="#8c1460"/><rect x="4.6" y="2.3" width="1.6" height="6.1" fill="#2480d0"/><rect x="6.2" y="1.3" width="1.5" height="7.1" fill="#b8a000"/><rect x="1" y="8" width="6.8" height="0.8" fill="#202020"/></svg></div>
<div class="t" style="left:20.9px;top:51.04px;font-size:6.5px;line-height:10px;color:#282828;font-family:'Liberation Sans',sans-serif;transform:scaleX(0.79);transform-origin:0 50%;-webkit-text-stroke:0.02px #282828;letter-spacing:0.3px">verilog</div>
<div class="t" style="left:191px;top:51.04px;font-size:6.5px;line-height:10px;color:#303850;font-family:'Liberation Sans',sans-serif;transform:scaleX(0.78);transform-origin:0 50%;-webkit-text-stroke:0.02px #303850;letter-spacing:0.3px">Library</div>
<div class="t" style="left:222px;top:51.04px;font-size:6.5px;line-height:10px;color:#303850;font-family:'Liberation Sans',sans-serif;transform:scaleX(0.78);transform-origin:0 50%;-webkit-text-stroke:0.02px #303850;letter-spacing:0.3px">$MODEL_TECH/../verilog</div>
<div style="left:3px;top:60.879999999999995px;width:7px;height:6.5px"><svg width="7" height="6.5" viewBox="0 0 7 6.5" style="display:block;overflow:visible"><rect x="0.4" y="0.4" width="6" height="5.6" rx="2" fill="#f8fafc" stroke="#b0bcd8" stroke-width="0.8"/><path d="M1.9 3.2H4.9" stroke="#202020" stroke-width="0.9"/><path d="M3.4 1.7V4.7" stroke="#202020" stroke-width="0.9"/></svg></div>
<div style="left:9.3px;top:63.58px;width:1.5px;height:0.6px;background:#b0b0b0"></div>
<div style="left:11.0px;top:59.78px;width:9px;height:9px"><svg width="9" height="9" viewBox="0 0 9 9" style="display:block;overflow:visible"><path d="M0.2 8.6L1.6 5.5V8.6Z M8.6 8.6L7.2 5.5V8.6Z" fill="#101010"/><rect x="1.4" y="2" width="1.6" height="6.4" fill="#0c8040"/><rect x="3" y="0.4" width="1.6" height="8" fill="#8c1460"/><rect x="4.6" y="2.3" width="1.6" height="6.1" fill="#2480d0"/><rect x="6.2" y="1.3" width="1.5" height="7.1" fill="#b8a000"/><rect x="1" y="8" width="6.8" height="0.8" fill="#202020"/></svg></div>
<div class="t" style="left:20.9px;top:59.38px;font-size:6.5px;line-height:10px;color:#282828;font-family:'Liberation Sans',sans-serif;transform:scaleX(0.79);transform-origin:0 50%;-webkit-text-stroke:0.02px #282828;letter-spacing:0.3px">twentynm_ver</div>
<div class="t" style="left:191px;top:59.38px;font-size:6.5px;line-height:10px;color:#303850;font-family:'Liberation Sans',sans-serif;transform:scaleX(0.78);transform-origin:0 50%;-webkit-text-stroke:0.02px #303850;letter-spacing:0.3px">Library</div>
<div class="t" style="left:222px;top:59.38px;font-size:6.5px;line-height:10px;color:#303850;font-family:'Liberation Sans',sans-serif;transform:scaleX(0.78);transform-origin:0 50%;-webkit-text-stroke:0.02px #303850;letter-spacing:0.3px">$MODEL_TECH/../altera/ver</div>
<div style="left:3px;top:69.22px;width:7px;height:6.5px"><svg width="7" height="6.5" viewBox="0 0 7 6.5" style="display:block;overflow:visible"><rect x="0.4" y="0.4" width="6" height="5.6" rx="2" fill="#f8fafc" stroke="#b0bcd8" stroke-width="0.8"/><path d="M1.9 3.2H4.9" stroke="#202020" stroke-width="0.9"/><path d="M3.4 1.7V4.7" stroke="#202020" stroke-width="0.9"/></svg></div>
<div style="left:9.3px;top:71.92px;width:1.5px;height:0.6px;background:#b0b0b0"></div>
<div style="left:11.0px;top:68.12px;width:9px;height:9px"><svg width="9" height="9" viewBox="0 0 9 9" style="display:block;overflow:visible"><path d="M0.2 8.6L1.6 5.5V8.6Z M8.6 8.6L7.2 5.5V8.6Z" fill="#101010"/><rect x="1.4" y="2" width="1.6" height="6.4" fill="#0c8040"/><rect x="3" y="0.4" width="1.6" height="8" fill="#8c1460"/><rect x="4.6" y="2.3" width="1.6" height="6.1" fill="#2480d0"/><rect x="6.2" y="1.3" width="1.5" height="7.1" fill="#b8a000"/><rect x="1" y="8" width="6.8" height="0.8" fill="#202020"/></svg></div>
<div class="t" style="left:20.9px;top:67.72px;font-size:6.5px;line-height:10px;color:#282828;font-family:'Liberation Sans',sans-serif;transform:scaleX(0.79);transform-origin:0 50%;-webkit-text-stroke:0.02px #282828;letter-spacing:0.3px">twentynm_hssi_ver</div>
<div class="t" style="left:191px;top:67.72px;font-size:6.5px;line-height:10px;color:#303850;font-family:'Liberation Sans',sans-serif;transform:scaleX(0.78);transform-origin:0 50%;-webkit-text-stroke:0.02px #303850;letter-spacing:0.3px">Library</div>
<div class="t" style="left:222px;top:67.72px;font-size:6.5px;line-height:10px;color:#303850;font-family:'Liberation Sans',sans-serif;transform:scaleX(0.78);transform-origin:0 50%;-webkit-text-stroke:0.02px #303850;letter-spacing:0.3px">$MODEL_TECH/../altera/ver</div>
<div style="left:3px;top:77.56px;width:7px;height:6.5px"><svg width="7" height="6.5" viewBox="0 0 7 6.5" style="display:block;overflow:visible"><rect x="0.4" y="0.4" width="6" height="5.6" rx="2" fill="#f8fafc" stroke="#b0bcd8" stroke-width="0.8"/><path d="M1.9 3.2H4.9" stroke="#202020" stroke-width="0.9"/><path d="M3.4 1.7V4.7" stroke="#202020" stroke-width="0.9"/></svg></div>
<div style="left:9.3px;top:80.26px;width:1.5px;height:0.6px;background:#b0b0b0"></div>
<div style="left:11.0px;top:76.46000000000001px;width:9px;height:9px"><svg width="9" height="9" viewBox="0 0 9 9" style="display:block;overflow:visible"><path d="M0.2 8.6L1.6 5.5V8.6Z M8.6 8.6L7.2 5.5V8.6Z" fill="#101010"/><rect x="1.4" y="2" width="1.6" height="6.4" fill="#0c8040"/><rect x="3" y="0.4" width="1.6" height="8" fill="#8c1460"/><rect x="4.6" y="2.3" width="1.6" height="6.1" fill="#2480d0"/><rect x="6.2" y="1.3" width="1.5" height="7.1" fill="#b8a000"/><rect x="1" y="8" width="6.8" height="0.8" fill="#202020"/></svg></div>
<div class="t" style="left:20.9px;top:76.06px;font-size:6.5px;line-height:10px;color:#282828;font-family:'Liberation Sans',sans-serif;transform:scaleX(0.79);transform-origin:0 50%;-webkit-text-stroke:0.02px #282828;letter-spacing:0.3px">twentynm_hssi</div>
<div class="t" style="left:191px;top:76.06px;font-size:6.5px;line-height:10px;color:#303850;font-family:'Liberation Sans',sans-serif;transform:scaleX(0.78);transform-origin:0 50%;-webkit-text-stroke:0.02px #303850;letter-spacing:0.3px">Library</div>
<div class="t" style="left:222px;top:76.06px;font-size:6.5px;line-height:10px;color:#303850;font-family:'Liberation Sans',sans-serif;transform:scaleX(0.78);transform-origin:0 50%;-webkit-text-stroke:0.02px #303850;letter-spacing:0.3px">$MODEL_TECH/../altera/vhc</div>
<div style="left:3px;top:85.9px;width:7px;height:6.5px"><svg width="7" height="6.5" viewBox="0 0 7 6.5" style="display:block;overflow:visible"><rect x="0.4" y="0.4" width="6" height="5.6" rx="2" fill="#f8fafc" stroke="#b0bcd8" stroke-width="0.8"/><path d="M1.9 3.2H4.9" stroke="#202020" stroke-width="0.9"/><path d="M3.4 1.7V4.7" stroke="#202020" stroke-width="0.9"/></svg></div>
<div style="left:9.3px;top:88.60000000000001px;width:1.5px;height:0.6px;background:#b0b0b0"></div>
<div style="left:11.0px;top:84.80000000000001px;width:9px;height:9px"><svg width="9" height="9" viewBox="0 0 9 9" style="display:block;overflow:visible"><path d="M0.2 8.6L1.6 5.5V8.6Z M8.6 8.6L7.2 5.5V8.6Z" fill="#101010"/><rect x="1.4" y="2" width="1.6" height="6.4" fill="#0c8040"/><rect x="3" y="0.4" width="1.6" height="8" fill="#8c1460"/><rect x="4.6" y="2.3" width="1.6" height="6.1" fill="#2480d0"/><rect x="6.2" y="1.3" width="1.5" height="7.1" fill="#b8a000"/><rect x="1" y="8" width="6.8" height="0.8" fill="#202020"/></svg></div>
<div class="t" style="left:20.9px;top:84.40px;font-size:6.5px;line-height:10px;color:#282828;font-family:'Liberation Sans',sans-serif;transform:scaleX(0.79);transform-origin:0 50%;-webkit-text-stroke:0.02px #282828;letter-spacing:0.3px">twentynm_hip_ver</div>
<div class="t" style="left:191px;top:84.40px;font-size:6.5px;line-height:10px;color:#303850;font-family:'Liberation Sans',sans-serif;transform:scaleX(0.78);transform-origin:0 50%;-webkit-text-stroke:0.02px #303850;letter-spacing:0.3px">Library</div>
<div class="t" style="left:222px;top:84.40px;font-size:6.5px;line-height:10px;color:#303850;font-family:'Liberation Sans',sans-serif;transform:scaleX(0.78);transform-origin:0 50%;-webkit-text-stroke:0.02px #303850;letter-spacing:0.3px">$MODEL_TECH/../altera/ver</div>
<div style="left:3px;top:94.24000000000001px;width:7px;height:6.5px"><svg width="7" height="6.5" viewBox="0 0 7 6.5" style="display:block;overflow:visible"><rect x="0.4" y="0.4" width="6" height="5.6" rx="2" fill="#f8fafc" stroke="#b0bcd8" stroke-width="0.8"/><path d="M1.9 3.2H4.9" stroke="#202020" stroke-width="0.9"/><path d="M3.4 1.7V4.7" stroke="#202020" stroke-width="0.9"/></svg></div>
<div style="left:9.3px;top:96.94000000000001px;width:1.5px;height:0.6px;background:#b0b0b0"></div>
<div style="left:11.0px;top:93.14000000000001px;width:9px;height:9px"><svg width="9" height="9" viewBox="0 0 9 9" style="display:block;overflow:visible"><path d="M0.2 8.6L1.6 5.5V8.6Z M8.6 8.6L7.2 5.5V8.6Z" fill="#101010"/><rect x="1.4" y="2" width="1.6" height="6.4" fill="#0c8040"/><rect x="3" y="0.4" width="1.6" height="8" fill="#8c1460"/><rect x="4.6" y="2.3" width="1.6" height="6.1" fill="#2480d0"/><rect x="6.2" y="1.3" width="1.5" height="7.1" fill="#b8a000"/><rect x="1" y="8" width="6.8" height="0.8" fill="#202020"/></svg></div>
<div class="t" style="left:20.9px;top:92.74px;font-size:6.5px;line-height:10px;color:#282828;font-family:'Liberation Sans',sans-serif;transform:scaleX(0.79);transform-origin:0 50%;-webkit-text-stroke:0.02px #282828;letter-spacing:0.3px">twentynm_hip</div>
<div class="t" style="left:191px;top:92.74px;font-size:6.5px;line-height:10px;color:#303850;font-family:'Liberation Sans',sans-serif;transform:scaleX(0.78);transform-origin:0 50%;-webkit-text-stroke:0.02px #303850;letter-spacing:0.3px">Library</div>
<div class="t" style="left:222px;top:92.74px;font-size:6.5px;line-height:10px;color:#303850;font-family:'Liberation Sans',sans-serif;transform:scaleX(0.78);transform-origin:0 50%;-webkit-text-stroke:0.02px #303850;letter-spacing:0.3px">$MODEL_TECH/../altera/vhc</div>
<div style="left:3px;top:102.57999999999998px;width:7px;height:6.5px"><svg width="7" height="6.5" viewBox="0 0 7 6.5" style="display:block;overflow:visible"><rect x="0.4" y="0.4" width="6" height="5.6" rx="2" fill="#f8fafc" stroke="#b0bcd8" stroke-width="0.8"/><path d="M1.9 3.2H4.9" stroke="#202020" stroke-width="0.9"/><path d="M3.4 1.7V4.7" stroke="#202020" stroke-width="0.9"/></svg></div>
<div style="left:9.3px;top:105.27999999999999px;width:1.5px;height:0.6px;background:#b0b0b0"></div>
<div style="left:11.0px;top:101.47999999999999px;width:9px;height:9px"><svg width="9" height="9" viewBox="0 0 9 9" style="display:block;overflow:visible"><path d="M0.2 8.6L1.6 5.5V8.6Z M8.6 8.6L7.2 5.5V8.6Z" fill="#101010"/><rect x="1.4" y="2" width="1.6" height="6.4" fill="#0c8040"/><rect x="3" y="0.4" width="1.6" height="8" fill="#8c1460"/><rect x="4.6" y="2.3" width="1.6" height="6.1" fill="#2480d0"/><rect x="6.2" y="1.3" width="1.5" height="7.1" fill="#b8a000"/><rect x="1" y="8" width="6.8" height="0.8" fill="#202020"/></svg></div>
<div class="t" style="left:20.9px;top:101.08px;font-size:6.5px;line-height:10px;color:#282828;font-family:'Liberation Sans',sans-serif;transform:scaleX(0.79);transform-origin:0 50%;-webkit-text-stroke:0.02px #282828;letter-spacing:0.3px">twentynm</div>
<div class="t" style="left:191px;top:101.08px;font-size:6.5px;line-height:10px;color:#303850;font-family:'Liberation Sans',sans-serif;transform:scaleX(0.78);transform-origin:0 50%;-webkit-text-stroke:0.02px #303850;letter-spacing:0.3px">Library</div>
<div class="t" style="left:222px;top:101.08px;font-size:6.5px;line-height:10px;color:#303850;font-family:'Liberation Sans',sans-serif;transform:scaleX(0.78);transform-origin:0 50%;-webkit-text-stroke:0.02px #303850;letter-spacing:0.3px">$MODEL_TECH/../altera/vhc</div>
<div style="left:3px;top:110.92000000000002px;width:7px;height:6.5px"><svg width="7" height="6.5" viewBox="0 0 7 6.5" style="display:block;overflow:visible"><rect x="0.4" y="0.4" width="6" height="5.6" rx="2" fill="#f8fafc" stroke="#b0bcd8" stroke-width="0.8"/><path d="M1.9 3.2H4.9" stroke="#202020" stroke-width="0.9"/><path d="M3.4 1.7V4.7" stroke="#202020" stroke-width="0.9"/></svg></div>
<div style="left:9.3px;top:113.62000000000002px;width:1.5px;height:0.6px;background:#b0b0b0"></div>
<div style="left:11.0px;top:109.82000000000002px;width:9px;height:9px"><svg width="9" height="9" viewBox="0 0 9 9" style="display:block;overflow:visible"><path d="M0.2 8.6L1.6 5.5V8.6Z M8.6 8.6L7.2 5.5V8.6Z" fill="#101010"/><rect x="1.4" y="2" width="1.6" height="6.4" fill="#0c8040"/><rect x="3" y="0.4" width="1.6" height="8" fill="#8c1460"/><rect x="4.6" y="2.3" width="1.6" height="6.1" fill="#2480d0"/><rect x="6.2" y="1.3" width="1.5" height="7.1" fill="#b8a000"/><rect x="1" y="8" width="6.8" height="0.8" fill="#202020"/></svg></div>
<div class="t" style="left:20.9px;top:109.42px;font-size:6.5px;line-height:10px;color:#282828;font-family:'Liberation Sans',sans-serif;transform:scaleX(0.79);transform-origin:0 50%;-webkit-text-stroke:0.02px #282828;letter-spacing:0.3px">synopsys</div>
<div class="t" style="left:191px;top:109.42px;font-size:6.5px;line-height:10px;color:#303850;font-family:'Liberation Sans',sans-serif;transform:scaleX(0.78);transform-origin:0 50%;-webkit-text-stroke:0.02px #303850;letter-spacing:0.3px">Library</div>
<div class="t" style="left:222px;top:109.42px;font-size:6.5px;line-height:10px;color:#303850;font-family:'Liberation Sans',sans-serif;transform:scaleX(0.78);transform-origin:0 50%;-webkit-text-stroke:0.02px #303850;letter-spacing:0.3px">$MODEL_TECH/../synopsys</div>
<div style="left:3px;top:119.25999999999999px;width:7px;height:6.5px"><svg width="7" height="6.5" viewBox="0 0 7 6.5" style="display:block;overflow:visible"><rect x="0.4" y="0.4" width="6" height="5.6" rx="2" fill="#f8fafc" stroke="#b0bcd8" stroke-width="0.8"/><path d="M1.9 3.2H4.9" stroke="#202020" stroke-width="0.9"/><path d="M3.4 1.7V4.7" stroke="#202020" stroke-width="0.9"/></svg></div>
<div style="left:9.3px;top:121.96px;width:1.5px;height:0.6px;background:#b0b0b0"></div>
<div style="left:11.0px;top:118.16px;width:9px;height:9px"><svg width="9" height="9" viewBox="0 0 9 9" style="display:block;overflow:visible"><path d="M0.2 8.6L1.6 5.5V8.6Z M8.6 8.6L7.2 5.5V8.6Z" fill="#101010"/><rect x="1.4" y="2" width="1.6" height="6.4" fill="#0c8040"/><rect x="3" y="0.4" width="1.6" height="8" fill="#8c1460"/><rect x="4.6" y="2.3" width="1.6" height="6.1" fill="#2480d0"/><rect x="6.2" y="1.3" width="1.5" height="7.1" fill="#b8a000"/><rect x="1" y="8" width="6.8" height="0.8" fill="#202020"/></svg></div>
<div class="t" style="left:20.9px;top:117.76px;font-size:6.5px;line-height:10px;color:#282828;font-family:'Liberation Sans',sans-serif;transform:scaleX(0.79);transform-origin:0 50%;-webkit-text-stroke:0.02px #282828;letter-spacing:0.3px">sv_std</div>
<div class="t" style="left:191px;top:117.76px;font-size:6.5px;line-height:10px;color:#303850;font-family:'Liberation Sans',sans-serif;transform:scaleX(0.78);transform-origin:0 50%;-webkit-text-stroke:0.02px #303850;letter-spacing:0.3px">Library</div>
<div class="t" style="left:222px;top:117.76px;font-size:6.5px;line-height:10px;color:#303850;font-family:'Liberation Sans',sans-serif;transform:scaleX(0.78);transform-origin:0 50%;-webkit-text-stroke:0.02px #303850;letter-spacing:0.3px">$MODEL_TECH/../sv_std</div>
<div style="left:3px;top:127.6px;width:7px;height:6.5px"><svg width="7" height="6.5" viewBox="0 0 7 6.5" style="display:block;overflow:visible"><rect x="0.4" y="0.4" width="6" height="5.6" rx="2" fill="#f8fafc" stroke="#b0bcd8" stroke-width="0.8"/><path d="M1.9 3.2H4.9" stroke="#202020" stroke-width="0.9"/><path d="M3.4 1.7V4.7" stroke="#202020" stroke-width="0.9"/></svg></div>
<div style="left:9.3px;top:130.29999999999998px;width:1.5px;height:0.6px;background:#b0b0b0"></div>
<div style="left:11.0px;top:126.5px;width:9px;height:9px"><svg width="9" height="9" viewBox="0 0 9 9" style="display:block;overflow:visible"><path d="M0.2 8.6L1.6 5.5V8.6Z M8.6 8.6L7.2 5.5V8.6Z" fill="#101010"/><rect x="1.4" y="2" width="1.6" height="6.4" fill="#0c8040"/><rect x="3" y="0.4" width="1.6" height="8" fill="#8c1460"/><rect x="4.6" y="2.3" width="1.6" height="6.1" fill="#2480d0"/><rect x="6.2" y="1.3" width="1.5" height="7.1" fill="#b8a000"/><rect x="1" y="8" width="6.8" height="0.8" fill="#202020"/></svg></div>
<div class="t" style="left:20.9px;top:126.10px;font-size:6.5px;line-height:10px;color:#282828;font-family:'Liberation Sans',sans-serif;transform:scaleX(0.79);transform-origin:0 50%;-webkit-text-stroke:0.02px #282828;letter-spacing:0.3px">stratixv_ver</div>
<div class="t" style="left:191px;top:126.10px;font-size:6.5px;line-height:10px;color:#303850;font-family:'Liberation Sans',sans-serif;transform:scaleX(0.78);transform-origin:0 50%;-webkit-text-stroke:0.02px #303850;letter-spacing:0.3px">Library</div>
<div class="t" style="left:222px;top:126.10px;font-size:6.5px;line-height:10px;color:#303850;font-family:'Liberation Sans',sans-serif;transform:scaleX(0.78);transform-origin:0 50%;-webkit-text-stroke:0.02px #303850;letter-spacing:0.3px">$MODEL_TECH/../altera/ver</div>
<div style="left:3px;top:135.94px;width:7px;height:6.5px"><svg width="7" height="6.5" viewBox="0 0 7 6.5" style="display:block;overflow:visible"><rect x="0.4" y="0.4" width="6" height="5.6" rx="2" fill="#f8fafc" stroke="#b0bcd8" stroke-width="0.8"/><path d="M1.9 3.2H4.9" stroke="#202020" stroke-width="0.9"/><path d="M3.4 1.7V4.7" stroke="#202020" stroke-width="0.9"/></svg></div>
<div style="left:9.3px;top:138.64px;width:1.5px;height:0.6px;background:#b0b0b0"></div>
<div style="left:11.0px;top:134.83999999999997px;width:9px;height:9px"><svg width="9" height="9" viewBox="0 0 9 9" style="display:block;overflow:visible"><path d="M0.2 8.6L1.6 5.5V8.6Z M8.6 8.6L7.2 5.5V8.6Z" fill="#101010"/><rect x="1.4" y="2" width="1.6" height="6.4" fill="#0c8040"/><rect x="3" y="0.4" width="1.6" height="8" fill="#8c1460"/><rect x="4.6" y="2.3" width="1.6" height="6.1" fill="#2480d0"/><rect x="6.2" y="1.3" width="1.5" height="7.1" fill="#b8a000"/><rect x="1" y="8" width="6.8" height="0.8" fill="#202020"/></svg></div>
<div class="t" style="left:20.9px;top:134.44px;font-size:6.5px;line-height:10px;color:#282828;font-family:'Liberation Sans',sans-serif;transform:scaleX(0.79);transform-origin:0 50%;-webkit-text-stroke:0.02px #282828;letter-spacing:0.3px">stratixv_pcie_hip_ver</div>
<div class="t" style="left:191px;top:134.44px;font-size:6.5px;line-height:10px;color:#303850;font-family:'Liberation Sans',sans-serif;transform:scaleX(0.78);transform-origin:0 50%;-webkit-text-stroke:0.02px #303850;letter-spacing:0.3px">Library</div>
<div class="t" style="left:222px;top:134.44px;font-size:6.5px;line-height:10px;color:#303850;font-family:'Liberation Sans',sans-serif;transform:scaleX(0.78);transform-origin:0 50%;-webkit-text-stroke:0.02px #303850;letter-spacing:0.3px">$MODEL_TECH/../altera/ver</div>
</div>
<div style="left:295px;top:67.5px;width:8.3px;height:151px;background:#f0f0f0;border-left:1px solid #e4e4e4"></div>
<div style="left:295.5px;top:68.5px;width:7.3px;height:7px;background:#fcfcfc;border-right:1px solid #8a8a8a;border-bottom:1px solid #8a8a8a;border-top:0.5px solid #e0e0e0;border-left:0.5px solid #e0e0e0"></div>
<div style="left:297.3px;top:70.8px;width:3.6px;height:2.4px"><svg width="3.6" height="2.4" viewBox="0 0 3.6 2.4" style="display:block;overflow:visible"><path d="M0 2.4H3.6L1.8 0Z" fill="#000"/></svg></div>
<div style="left:295.5px;top:75.5px;width:7.3px;height:26px;background:#fcfcfc;border-right:1px solid #8a8a8a;border-bottom:1px solid #8a8a8a;border-top:0.5px solid #e0e0e0;border-left:0.5px solid #e0e0e0"></div>
<div style="left:295.5px;top:210.3px;width:7.3px;height:7px;background:#fcfcfc;border-right:1px solid #8a8a8a;border-bottom:1px solid #8a8a8a;border-top:0.5px solid #e0e0e0;border-left:0.5px solid #e0e0e0"></div>
<div style="left:297.3px;top:212.8px;width:3.6px;height:2.4px"><svg width="3.6" height="2.4" viewBox="0 0 3.6 2.4" style="display:block;overflow:visible"><path d="M0 0H3.6L1.8 2.4Z" fill="#000"/></svg></div>
<div style="left:1px;top:217px;width:294px;height:12px;background:#f0f0f0"></div>
<div style="left:1px;top:226px;width:292.5px;height:1.8px;background:#808080"></div>
<div style="left:1.5px;top:217.8px;width:7.3px;height:7.5px;background:#fcfcfc;border-right:1px solid #8a8a8a;border-bottom:1px solid #8a8a8a;border-top:0.5px solid #e0e0e0;border-left:0.5px solid #e0e0e0"></div>
<div style="left:4px;top:219.8px;width:2.4px;height:3.6px"><svg width="2.4" height="3.6" viewBox="0 0 2.4 3.6" style="display:block;overflow:visible"><path d="M2.4 0V3.6L0 1.8Z" fill="#000"/></svg></div>
<div style="left:9px;top:217.8px;width:141px;height:7.5px;background:#fcfcfc;border-right:1px solid #8a8a8a;border-bottom:1px solid #8a8a8a;border-top:0.5px solid #e0e0e0;border-left:0.5px solid #e0e0e0"></div>
<div style="left:285.5px;top:217.8px;width:7.5px;height:7.5px;background:#fcfcfc;border-right:1px solid #8a8a8a;border-bottom:1px solid #8a8a8a;border-top:0.5px solid #e0e0e0;border-left:0.5px solid #e0e0e0"></div>
<div style="left:288.3px;top:219.8px;width:2.4px;height:3.6px"><svg width="2.4" height="3.6" viewBox="0 0 2.4 3.6" style="display:block;overflow:visible"><path d="M0 0V3.6L2.4 1.8Z" fill="#000"/></svg></div>
<div style="left:1px;top:227.3px;width:292.5px;height:12.5px;background:#f0f0f0"></div>
<div style="left:1px;top:228px;width:38.8px;height:11.5px;background:#fff;border:1px solid #a8a8a8;border-top:none;border-radius:0 0 1px 1px"></div>
<div style="left:2.3px;top:230.2px;width:9px;height:9px"><svg width="9" height="9" viewBox="0 0 9 9" style="display:block;overflow:visible"><path d="M0.2 8.6L1.6 5.5V8.6Z M8.6 8.6L7.2 5.5V8.6Z" fill="#101010"/><rect x="1.4" y="2" width="1.6" height="6.4" fill="#0c8040"/><rect x="3" y="0.4" width="1.6" height="8" fill="#8c1460"/><rect x="4.6" y="2.3" width="1.6" height="6.1" fill="#2480d0"/><rect x="6.2" y="1.3" width="1.5" height="7.1" fill="#b8a000"/><rect x="1" y="8" width="6.8" height="0.8" fill="#202020"/></svg></div>
<div class="t" style="left:12.3px;top:229.80px;font-size:6.5px;line-height:10px;color:#202020;font-family:'Liberation Sans',sans-serif;transform:scaleX(0.87);transform-origin:0 50%;-webkit-text-stroke:0.06px #202020;">Library</div>
<div class="t" style="left:34.3px;top:229.50px;font-size:7px;line-height:10px;color:#b4b4b4;font-family:'Liberation Sans',sans-serif;">×</div>
<div style="left:41px;top:228px;width:39.5px;height:11.3px;background:#e4e4e4;border:1px solid #a0a0a0;border-top:none"></div>
<div style="left:42.5px;top:229.5px;width:8.5px;height:7px"><svg width="8.5" height="7" viewBox="0 0 8.5 7" style="display:block;overflow:visible"><rect x="0.4" y="1.5" width="7.6" height="5" fill="#f4f4f4" stroke="#505050" stroke-width="0.6"/><rect x="0.4" y="0" width="7.6" height="1.8" fill="#3a3ad0"/><rect x="2" y="2.8" width="1.2" height="1.2" fill="#3a3ad0"/><rect x="5" y="2.8" width="1.2" height="1.2" fill="#3a3ad0"/></svg></div>
<div class="t" style="left:52.5px;top:229.80px;font-size:6.5px;line-height:10px;color:#303030;font-family:'Liberation Sans',sans-serif;transform:scaleX(0.87);transform-origin:0 50%;-webkit-text-stroke:0.06px #303030;">Project</div>
<div class="t" style="left:75.5px;top:229.50px;font-size:7px;line-height:10px;color:#b4b4b4;font-family:'Liberation Sans',sans-serif;">×</div>
<div style="left:293.5px;top:229px;width:4.8px;height:8px;background:#fcfcfc;border-right:1px solid #8a8a8a;border-bottom:1px solid #8a8a8a;border-top:0.5px solid #e0e0e0;border-left:0.5px solid #e0e0e0"></div>
<div style="left:298.3px;top:229px;width:4.8px;height:8px;background:#fcfcfc;border-right:1px solid #8a8a8a;border-bottom:1px solid #8a8a8a;border-top:0.5px solid #e0e0e0;border-left:0.5px solid #e0e0e0"></div>
<div style="left:294.8px;top:231.5px;width:2.2px;height:3px"><svg width="2.2" height="3" viewBox="0 0 2.2 3" style="display:block;overflow:visible"><path d="M2.2 0V3L0 1.5Z" fill="#333"/></svg></div>
<div style="left:299.8px;top:231.5px;width:2.2px;height:3px"><svg width="2.2" height="3" viewBox="0 0 2.2 3" style="display:block;overflow:visible"><path d="M0 0V3L2.2 1.5Z" fill="#333"/></svg></div>
<div style="left:303.5px;top:56.5px;width:4.8px;height:184px;background:#e8e8e8;border-left:1px solid #d0d0d0;border-right:1px solid #d0d0d0"></div>
<div style="left:341.5px;top:60.3px;width:629.5px;height:6px;background:linear-gradient(#fff 0 1px,#a4a4a4 1px 2px,#fafafa 2px 3.6px,#a4a4a4 3.6px 4.6px,#fff 4.6px 5.6px,transparent 5.6px)"></div>
<div class="t" style="left:319px;top:57.60px;font-size:6.5px;line-height:10px;color:#101010;font-family:'Liberation Sans',sans-serif;transform:scaleX(0.87);transform-origin:0 50%;-webkit-text-stroke:0.06px #101010;">Objects</div>
<div style="left:973px;top:59px;width:6.8px;height:7px;background:#f6f6f6;border-right:1px solid #a0a0a0;border-bottom:1px solid #a0a0a0;border-top:0.5px solid #fff;border-left:0.5px solid #fff"></div>
<div style="left:982px;top:59px;width:6.8px;height:7px;background:#f6f6f6;border-right:1px solid #a0a0a0;border-bottom:1px solid #a0a0a0;border-top:0.5px solid #fff;border-left:0.5px solid #fff"></div>
<div style="left:990.5px;top:59px;width:6.8px;height:7px;background:#f6f6f6;border-right:1px solid #a0a0a0;border-bottom:1px solid #a0a0a0;border-top:0.5px solid #fff;border-left:0.5px solid #fff"></div>
<div style="left:974px;top:60px;width:5px;height:5px"><svg width="5" height="5" viewBox="0 0 5 5" style="display:block;overflow:visible"><path d="M2.5 0.5V4.5M0.5 2.5H4.5" stroke="#000" stroke-width="1"/></svg></div>
<div style="left:983px;top:60px;width:5px;height:5px"><svg width="5" height="5" viewBox="0 0 5 5" style="display:block;overflow:visible"><rect x="0.5" y="2" width="2.5" height="2.5" fill="none" stroke="#333" stroke-width="0.7"/><path d="M2 3L4.5 0.5M3 0.5H4.5V2" fill="none" stroke="#000" stroke-width="0.9"/></svg></div>
<div style="left:991.5px;top:60px;width:5px;height:5px"><svg width="5" height="5" viewBox="0 0 5 5" style="display:block;overflow:visible"><path d="M0.5 0.5L4.5 4.5M4.5 0.5L0.5 4.5" stroke="#000" stroke-width="0.9"/></svg></div>
<div style="left:309px;top:58.2px;width:8.5px;height:8.5px"><svg width="8.5" height="8.5" viewBox="0 0 8.5 8.5" style="display:block;overflow:visible"><path d="M2.5 0.3L4.8 2.5L2.5 4.7L0.3 2.5Z" fill="#c040d8"/><path d="M5 1.8L8 4.3L5 6.8L2 4.3Z" fill="#20c8e8"/><path d="M5.5 4L8.3 5.5L6 8L4 6Z" fill="#20a040"/><path d="M2.8 3.5L5.5 6L2.8 8.5L0.2 6Z" fill="#1a50e0"/></svg></div>
<div style="left:308px;top:66.8px;width:689.5px;height:9.5px;background:#f0f0f0;border-bottom:1px solid #a8a8a8;border-top:1px solid #f8f8f8"></div>
<div style="left:310.2px;top:70px;width:4px;height:3.5px"><svg width="4" height="3.5" viewBox="0 0 4 3.5" style="display:block;overflow:visible"><path d="M0 0H4L2 3.5Z" fill="#202020"/></svg></div>
<div style="left:315.8px;top:67.8px;width:0.8px;height:7.5px;background:#d4d4d4"></div>
<div class="t" style="left:317px;top:67.00px;font-size:6.3px;line-height:10px;color:#101010;font-family:'Liberation Sans',sans-serif;transform:scaleX(0.87);transform-origin:0 50%;-webkit-text-stroke:0.06px #101010;">Name</div>
<div style="left:669px;top:67.5px;width:1.2px;height:8px;background:#a8a8a8;border-right:0.5px solid #fff"></div>
<div style="left:686.5px;top:67.5px;width:1.2px;height:8px;background:#a8a8a8;border-right:0.5px solid #fff"></div>
<div style="left:716px;top:67.5px;width:1.2px;height:8px;background:#a8a8a8;border-right:0.5px solid #fff"></div>
<div style="left:739px;top:67.5px;width:1.2px;height:8px;background:#a8a8a8;border-right:0.5px solid #fff"></div>
<div class="t" style="left:670px;top:67.00px;font-size:6.3px;line-height:10px;color:#101010;font-family:'Liberation Sans',sans-serif;transform:scaleX(0.85);transform-origin:0 50%;-webkit-text-stroke:0.06px #101010;">Value</div>
<div class="t" style="left:687.5px;top:67.00px;font-size:6.3px;line-height:10px;color:#101010;font-family:'Liberation Sans',sans-serif;transform:scaleX(0.85);transform-origin:0 50%;-webkit-text-stroke:0.06px #101010;">Kind</div>
<div class="t" style="left:717px;top:67.00px;font-size:6.3px;line-height:10px;color:#101010;font-family:'Liberation Sans',sans-serif;transform:scaleX(0.85);transform-origin:0 50%;-webkit-text-stroke:0.06px #101010;">Mode</div>
<div style="left:948.6px;top:68px;width:42.4px;height:7.3px;background:#e4eedc"></div>
<div style="left:948.6px;top:68px;width:0.6px;height:7.3px;background:#d4dccc"></div>
<div style="left:955.5px;top:68px;width:0.6px;height:7.3px;background:#d4dccc"></div>
<div style="left:982px;top:68px;width:0.6px;height:7.3px;background:#d4dccc"></div>
<div style="left:950.5px;top:69px;width:5px;height:5.5px"><svg width="5" height="5.5" viewBox="0 0 5 5.5" style="display:block;overflow:visible"><path d="M0.8 0.3V4.8H3" fill="none" stroke="#909890" stroke-width="0.6"/><path d="M2.5 1.5H4.5L3.5 2.8Z" fill="#a0a8a0"/></svg></div>
<div style="left:965px;top:71.3px;width:10.5px;height:0.8px;background:repeating-linear-gradient(90deg,#7888a0 0 1px,transparent 1px 1.6px)"></div>
<div style="left:983.5px;top:69px;width:6px;height:5.5px"><svg width="6" height="5.5" viewBox="0 0 6 5.5" style="display:block;overflow:visible"><path d="M0.5 2.7H4M3 0.5L5.5 2.7L3 5" fill="none" stroke="#909890" stroke-width="0.6"/></svg></div>
<div style="left:992.3px;top:69.2px;width:3.5px;height:5px"><svg width="3.5" height="5" viewBox="0 0 3.5 5" style="display:block;overflow:visible"><path d="M0 0V5L3.5 2.5Z" fill="#000"/></svg></div>
<div style="left:309px;top:76.3px;width:688px;height:69.2px;background:#505a8a"></div>
<div style="left:660px;top:76.3px;width:90px;height:10.3px;background:#5a68a0"></div>
<div class="t" style="left:677px;top:77.00px;font-size:6.5px;line-height:10px;color:#4a5488;font-family:'Liberation Sans',sans-serif;transform:scaleX(0.93);transform-origin:0 50%;">Window Snip</div>
<div style="left:650.8px;top:60.5px;width:11.5px;height:6px;background:#f2f2f2"></div>
<div style="left:652.3px;top:61.3px;width:8.5px;height:4.4px"><svg width="8.5" height="4.4" viewBox="0 0 8.5 4.4" style="display:block;overflow:visible"><rect x="0.3" y="0.3" width="7.9" height="3.8" fill="none" stroke="#a8a8a8" stroke-width="0.4" stroke-dasharray="0.5 0.5" opacity="0.8"/><path d="M1 1.2H7.5M1 2.2H7.5M1 3.2H7.5" stroke="#a8a8a8" stroke-width="0.7" stroke-dasharray="0.7 0.5"/></svg></div>
<div style="left:308px;top:145.5px;width:690px;height:5.3px;background:#d0d0d0"></div>
<div style="left:368.5px;top:154px;width:602.5px;height:6px;background:linear-gradient(#fff 0 1px,#a4a4a4 1px 2px,#fafafa 2px 3.6px,#a4a4a4 3.6px 4.6px,#fff 4.6px 5.6px,transparent 5.6px)"></div>
<div class="t" style="left:319px;top:151.30px;font-size:6.5px;line-height:10px;color:#101010;font-family:'Liberation Sans',sans-serif;transform:scaleX(0.87);transform-origin:0 50%;-webkit-text-stroke:0.06px #101010;">Processes (Active)</div>
<div style="left:973px;top:152px;width:6.8px;height:7px;background:#f6f6f6;border-right:1px solid #a0a0a0;border-bottom:1px solid #a0a0a0;border-top:0.5px solid #fff;border-left:0.5px solid #fff"></div>
<div style="left:982px;top:152px;width:6.8px;height:7px;background:#f6f6f6;border-right:1px solid #a0a0a0;border-bottom:1px solid #a0a0a0;border-top:0.5px solid #fff;border-left:0.5px solid #fff"></div>
<div style="left:990.5px;top:152px;width:6.8px;height:7px;background:#f6f6f6;border-right:1px solid #a0a0a0;border-bottom:1px solid #a0a0a0;border-top:0.5px solid #fff;border-left:0.5px solid #fff"></div>
<div style="left:974px;top:153px;width:5px;height:5px"><svg width="5" height="5" viewBox="0 0 5 5" style="display:block;overflow:visible"><path d="M2.5 0.5V4.5M0.5 2.5H4.5" stroke="#000" stroke-width="1"/></svg></div>
<div style="left:983px;top:153px;width:5px;height:5px"><svg width="5" height="5" viewBox="0 0 5 5" style="display:block;overflow:visible"><rect x="0.5" y="2" width="2.5" height="2.5" fill="none" stroke="#333" stroke-width="0.7"/><path d="M2 3L4.5 0.5M3 0.5H4.5V2" fill="none" stroke="#000" stroke-width="0.9"/></svg></div>
<div style="left:991.5px;top:153px;width:5px;height:5px"><svg width="5" height="5" viewBox="0 0 5 5" style="display:block;overflow:visible"><path d="M0.5 0.5L4.5 4.5M4.5 0.5L0.5 4.5" stroke="#000" stroke-width="0.9"/></svg></div>
<div style="left:309px;top:152px;width:8.5px;height:8.5px"><svg width="8.5" height="8.5" viewBox="0 0 8.5 8.5" style="display:block;overflow:visible"><circle cx="4.25" cy="4.25" r="3.3" fill="none" stroke="#4a78a8" stroke-width="2" stroke-dasharray="1.3 0.8"/><circle cx="4.25" cy="4.25" r="2.6" fill="#4a78a8"/><circle cx="4.25" cy="4.25" r="1.1" fill="#c8dcf0"/></svg></div>
<div style="left:308px;top:160.8px;width:689.5px;height:9.4px;background:#f0f0f0;border-bottom:1px solid #a8a8a8;border-top:1px solid #f8f8f8"></div>
<div style="left:310.2px;top:164px;width:4px;height:3.5px"><svg width="4" height="3.5" viewBox="0 0 4 3.5" style="display:block;overflow:visible"><path d="M0 0H4L2 3.5Z" fill="#202020"/></svg></div>
<div style="left:315.8px;top:161.8px;width:0.8px;height:7.5px;background:#d4d4d4"></div>
<div class="t" style="left:317px;top:161.00px;font-size:6.3px;line-height:10px;color:#101010;font-family:'Liberation Sans',sans-serif;transform:scaleX(0.87);transform-origin:0 50%;-webkit-text-stroke:0.06px #101010;">Name</div>
<div style="left:385px;top:161.5px;width:1.2px;height:8px;background:#a8a8a8;border-right:0.5px solid #fff"></div>
<div class="t" style="left:386.3px;top:161.40px;font-size:6.5px;line-height:10px;color:#101010;font-family:'Liberation Sans',sans-serif;transform:scaleX(0.9);transform-origin:0 50%;-webkit-text-stroke:0.06px #101010;">Type (filtered)</div>
<div style="left:439px;top:161.5px;width:1.2px;height:8px;background:#a8a8a8;border-right:0.5px solid #fff"></div>
<div class="t" style="left:440.3px;top:161.40px;font-size:6.5px;line-height:10px;color:#101010;font-family:'Liberation Sans',sans-serif;transform:scaleX(0.9);transform-origin:0 50%;-webkit-text-stroke:0.06px #101010;">State</div>
<div style="left:469px;top:161.5px;width:1.2px;height:8px;background:#a8a8a8;border-right:0.5px solid #fff"></div>
<div class="t" style="left:470.3px;top:161.40px;font-size:6.5px;line-height:10px;color:#101010;font-family:'Liberation Sans',sans-serif;transform:scaleX(0.9);transform-origin:0 50%;-webkit-text-stroke:0.06px #101010;">Order</div>
<div style="left:492px;top:161.5px;width:1.2px;height:8px;background:#a8a8a8;border-right:0.5px solid #fff"></div>
<div class="t" style="left:493.3px;top:161.40px;font-size:6.5px;line-height:10px;color:#101010;font-family:'Liberation Sans',sans-serif;transform:scaleX(0.9);transform-origin:0 50%;-webkit-text-stroke:0.06px #101010;">Parent Path</div>
<div style="left:542px;top:161.5px;width:1.2px;height:8px;background:#a8a8a8;border-right:0.5px solid #fff"></div>
<div class="t" style="left:543.3px;top:161.40px;font-size:6.5px;line-height:10px;color:#101010;font-family:'Liberation Sans',sans-serif;transform:scaleX(0.9);transform-origin:0 50%;-webkit-text-stroke:0.06px #101010;">Class Info</div>
<div style="left:622px;top:161.5px;width:1.2px;height:8px;background:#a8a8a8;border-right:0.5px solid #fff"></div>
<div class="t" style="left:623.3px;top:161.40px;font-size:6.5px;line-height:10px;color:#101010;font-family:'Liberation Sans',sans-serif;transform:scaleX(0.9);transform-origin:0 50%;-webkit-text-stroke:0.06px #101010;"></div>
<div style="left:309px;top:170.2px;width:688px;height:68.6px;background:#8aa2ff"></div>
<div style="left:664.2px;top:154px;width:11.5px;height:6px;background:#f2f2f2"></div>
<div style="left:665.7px;top:154.8px;width:8.5px;height:4.4px"><svg width="8.5" height="4.4" viewBox="0 0 8.5 4.4" style="display:block;overflow:visible"><rect x="0.3" y="0.3" width="7.9" height="3.8" fill="none" stroke="#a8a8a8" stroke-width="0.4" stroke-dasharray="0.5 0.5" opacity="0.8"/><path d="M1 1.2H7.5M1 2.2H7.5M1 3.2H7.5" stroke="#a8a8a8" stroke-width="0.7" stroke-dasharray="0.7 0.5"/></svg></div>
<div style="left:0px;top:238.8px;width:999px;height:2.8px;background:#dadada"></div>
<div style="left:0px;top:241.6px;width:999px;height:2.4px;background:#c8c8c8"></div>
<div style="left:1px;top:244px;width:997px;height:9.5px;background:#a6c6e6"></div>
<div style="left:2px;top:245px;width:8px;height:8px"><svg width="8" height="8" viewBox="0 0 8 8" style="display:block;overflow:visible"><path d="M0.8 7.8V3.5Q0.8 0.5 4 0.5Q7.2 0.5 7.2 3.5V7.8H6V4Q6 1.8 4 1.8Q2 1.8 2 4V7.8Z" fill="#505050"/><path d="M2 7.8V4Q2 1.8 4 1.8Q6 1.8 6 4V7.8Z" fill="#e8e8e8"/></svg></div>
<div class="t" style="left:11px;top:244.20px;font-size:6.5px;line-height:10px;color:#101010;font-family:'Liberation Sans',sans-serif;transform:scaleX(0.87);transform-origin:0 50%;-webkit-text-stroke:0.06px #101010;">Transcript</div>
<div style="left:1px;top:244px;width:997px;height:1px;background:#b8d0e4"></div>
<div style="left:39.5px;top:245.6px;width:932.5px;height:6px;background:linear-gradient(#94b4d4 0 0.6px,#c4e4fa 0.6px 1.6px,#587088 1.6px 2.8px,#a8c8e4 2.8px 3.6px,#c4e4fa 3.6px 4.5px,#485468 4.5px 5.6px,#a6c6e6 5.6px 6px)"></div>
<div style="left:972px;top:245px;width:6.8px;height:7px;background:#f6f6f6;border-right:1px solid #a0a0a0;border-bottom:1px solid #a0a0a0;border-top:0.5px solid #fff;border-left:0.5px solid #fff"></div>
<div style="left:981px;top:245px;width:6.8px;height:7px;background:#f6f6f6;border-right:1px solid #a0a0a0;border-bottom:1px solid #a0a0a0;border-top:0.5px solid #fff;border-left:0.5px solid #fff"></div>
<div style="left:989.5px;top:245px;width:6.8px;height:7px;background:#f6f6f6;border-right:1px solid #a0a0a0;border-bottom:1px solid #a0a0a0;border-top:0.5px solid #fff;border-left:0.5px solid #fff"></div>
<div style="left:973px;top:246px;width:5px;height:5px"><svg width="5" height="5" viewBox="0 0 5 5" style="display:block;overflow:visible"><path d="M2.5 0.5V4.5M0.5 2.5H4.5" stroke="#000" stroke-width="1"/></svg></div>
<div style="left:982px;top:246px;width:5px;height:5px"><svg width="5" height="5" viewBox="0 0 5 5" style="display:block;overflow:visible"><rect x="0.5" y="2" width="2.5" height="2.5" fill="none" stroke="#333" stroke-width="0.7"/><path d="M2 3L4.5 0.5M3 0.5H4.5V2" fill="none" stroke="#000" stroke-width="0.9"/></svg></div>
<div style="left:990.5px;top:246px;width:5px;height:5px"><svg width="5" height="5" viewBox="0 0 5 5" style="display:block;overflow:visible"><path d="M0.5 0.5L4.5 4.5M4.5 0.5L0.5 4.5" stroke="#000" stroke-width="0.9"/></svg></div>
<div style="left:499px;top:245.5px;width:11.5px;height:6px;background:#a6c6e6"></div>
<div style="left:500.5px;top:246.3px;width:8.5px;height:4.4px"><svg width="8.5" height="4.4" viewBox="0 0 8.5 4.4" style="display:block;overflow:visible"><rect x="0.3" y="0.3" width="7.9" height="3.8" fill="none" stroke="#7890b0" stroke-width="0.4" stroke-dasharray="0.5 0.5" opacity="0.8"/><path d="M1 1.2H7.5M1 2.2H7.5M1 3.2H7.5" stroke="#7890b0" stroke-width="0.7" stroke-dasharray="0.7 0.5"/></svg></div>
<div style="left:1.5px;top:253.3px;width:988px;height:273.5px;background:#fff;border-left:1px solid #3c3c3c;border-top:1px solid #3c3c3c"></div>
<div style="left:2.5px;top:254.3px;width:986.5px;height:272px;overflow:hidden;background:#fff">
<div class="t" style="left:1.5px;top:3.3px;font-family:'Liberation Mono',monospace;font-size:7px;line-height:7.79px;color:#1818ff;transform:scaleX(0.867);transform-origin:0 0;-webkit-text-stroke:0px #0a0aff"># vsim -t 1ps -L altera_ver -L lpm_ver -L sgate_ver -L altera_mf_ver -L altera_lnsim_ver -L arriav_ver -L arriav_hssi_ver -L arriav_pcie_hip_ver -L arriav -L rtl_work -L work -L fft_ii_0 -voptargs=&quot;&quot;+acc&quot;&quot; fft_ii_0_example_design_tb
# Start time: 17:17:35 on Oct 27,2022
# Loading work.fft_ii_0_example_design_tb
# Loading work.fft_ii_0_example_design
# Loading sv_std.std
# Loading work.fft_ii_0_example_design_core
# ** Error: (vsim-3033) E:/intelFPGA/working_directory/fft_ex/fft_ii_0_example_design/src/fft_ii_0_example_design_tb.v(44): Instantiation of &#x27;altera_avalon_clock_source&#x27; failed. The design unit was not found.
#    Time: 0 ps  Iteration: 0  Instance: /fft_ii_0_example_design_tb File: E:/intelFPGA/working_directory/fft_ex/fft_ii_0_example_design/src/fft_ii_0_example_design_tb.v
#         Searched libraries:
#             E:/intelFPGA/17.1/modelsim_ase/altera/verilog/altera
#             E:/intelFPGA/17.1/modelsim_ase/altera/verilog/220model
#             E:/intelFPGA/17.1/modelsim_ase/altera/verilog/sgate
#             E:/intelFPGA/17.1/modelsim_ase/altera/verilog/altera_mf
#             E:/intelFPGA/17.1/modelsim_ase/altera/verilog/altera_lnsim
#             E:/intelFPGA/17.1/modelsim_ase/altera/verilog/arriav
#             E:/intelFPGA/17.1/modelsim_ase/altera/verilog/arriav_hssi
#             E:/intelFPGA/17.1/modelsim_ase/altera/verilog/arriav_pcie_hip
#             E:/intelFPGA/17.1/modelsim_ase/altera/vhdl/arriav
#             E:/intelFPGA/working_directory/fft_ex/simulation/modelsim/rtl_work
#             E:/intelFPGA/working_directory/fft_ex/simulation/modelsim/rtl_work
#             E:/intelFPGA/working_directory/fft_ex/simulation/modelsim/fft_ex_iputf_libs/fft_ii_0
# ** Error: (vsim-3033) E:/intelFPGA/working_directory/fft_ex/fft_ii_0_example_design/src/fft_ii_0_example_design_tb.v(51): Instantiation of &#x27;altera_avalon_reset_source&#x27; failed. The design unit was not found.
#    Time: 0 ps  Iteration: 0  Instance: /fft_ii_0_example_design_tb File: E:/intelFPGA/working_directory/fft_ex/fft_ii_0_example_design/src/fft_ii_0_example_design_tb.v
#         Searched libraries:
#             E:/intelFPGA/17.1/modelsim_ase/altera/verilog/altera
#             E:/intelFPGA/17.1/modelsim_ase/altera/verilog/220model
#             E:/intelFPGA/17.1/modelsim_ase/altera/verilog/sgate
#             E:/intelFPGA/17.1/modelsim_ase/altera/verilog/altera_mf
#             E:/intelFPGA/17.1/modelsim_ase/altera/verilog/altera_lnsim
#             E:/intelFPGA/17.1/modelsim_ase/altera/verilog/arriav
#             E:/intelFPGA/17.1/modelsim_ase/altera/verilog/arriav_hssi
#             E:/intelFPGA/17.1/modelsim_ase/altera/verilog/arriav_pcie_hip
#             E:/intelFPGA/17.1/modelsim_ase/altera/vhdl/arriav
#             E:/intelFPGA/working_directory/fft_ex/simulation/modelsim/rtl_work
#             E:/intelFPGA/working_directory/fft_ex/simulation/modelsim/rtl_work
#             E:/intelFPGA/working_directory/fft_ex/simulation/modelsim/fft_ex_iputf_libs/fft_ii_0</div>
</div>
<div style="left:243.8px;top:365px;width:1px;height:7.8px;background:#222"></div>
<div style="left:989px;top:253.5px;width:9px;height:273.5px;background:#f0f0f0;border-left:1px solid #e8e8e8"></div>
<div style="left:989.5px;top:254px;width:7.8px;height:8px;background:#fcfcfc;border-right:1px solid #8a8a8a;border-bottom:1px solid #8a8a8a;border-top:0.5px solid #e0e0e0;border-left:0.5px solid #e0e0e0"></div>
<div style="left:991.6px;top:257px;width:3.6px;height:2.4px"><svg width="3.6" height="2.4" viewBox="0 0 3.6 2.4" style="display:block;overflow:visible"><path d="M0 2.4H3.6L1.8 0Z" fill="#000"/></svg></div>
<div style="left:989.5px;top:262px;width:7.8px;height:251px;background:#fcfcfc;border-right:1px solid #8a8a8a;border-bottom:1px solid #8a8a8a;border-top:0.5px solid #e0e0e0;border-left:0.5px solid #e0e0e0"></div>
<div style="left:989.5px;top:518px;width:7.8px;height:8px;background:#fcfcfc;border-right:1px solid #8a8a8a;border-bottom:1px solid #8a8a8a;border-top:0.5px solid #e0e0e0;border-left:0.5px solid #e0e0e0"></div>
<div style="left:991.6px;top:521px;width:3.6px;height:2.4px"><svg width="3.6" height="2.4" viewBox="0 0 3.6 2.4" style="display:block;overflow:visible"><path d="M0 0H3.6L1.8 2.4Z" fill="#000"/></svg></div>
<div style="left:0px;top:526.8px;width:999px;height:14.2px;background:#f0f0f0;border-top:1px solid #c8c8c8"></div>
<div style="left:1px;top:530px;width:102.5px;height:11px;border-left:1px solid #a8a8a8;border-top:1px solid #a8a8a8"></div>
<div class="t" style="left:2.8px;top:530.70px;font-size:6.5px;line-height:10px;color:#202020;font-family:'Liberation Sans',sans-serif;transform:scaleX(0.85);transform-origin:0 50%;-webkit-text-stroke:0.06px #202020;">&lt;No Design Loaded&gt;</div>
<div style="left:106.5px;top:530px;width:706px;height:11px;border-left:1px solid #a8a8a8;border-top:1px solid #a8a8a8"></div>
<div style="left:814.5px;top:530px;width:174px;height:11px;border-left:1px solid #a8a8a8;border-top:1px solid #a8a8a8"></div>
<div class="t" style="left:108px;top:530.70px;font-size:6.5px;line-height:10px;color:#202020;font-family:'Liberation Sans',sans-serif;transform:scaleX(0.88);transform-origin:0 50%;-webkit-text-stroke:0.06px #202020;">&lt;No Context&gt;</div>
<div style="left:997.5px;top:56px;width:1.5px;height:485px;background:#f0f0f0"></div>
<div style="left:992px;top:535px;width:6px;height:6px"><svg width="6" height="6" viewBox="0 0 6 6" style="display:block;overflow:visible"><path d="M5.5 1L1 5.5M5.5 3L3 5.5" stroke="#a0a0a0" stroke-width="0.6"/></svg></div>
</body></html>
